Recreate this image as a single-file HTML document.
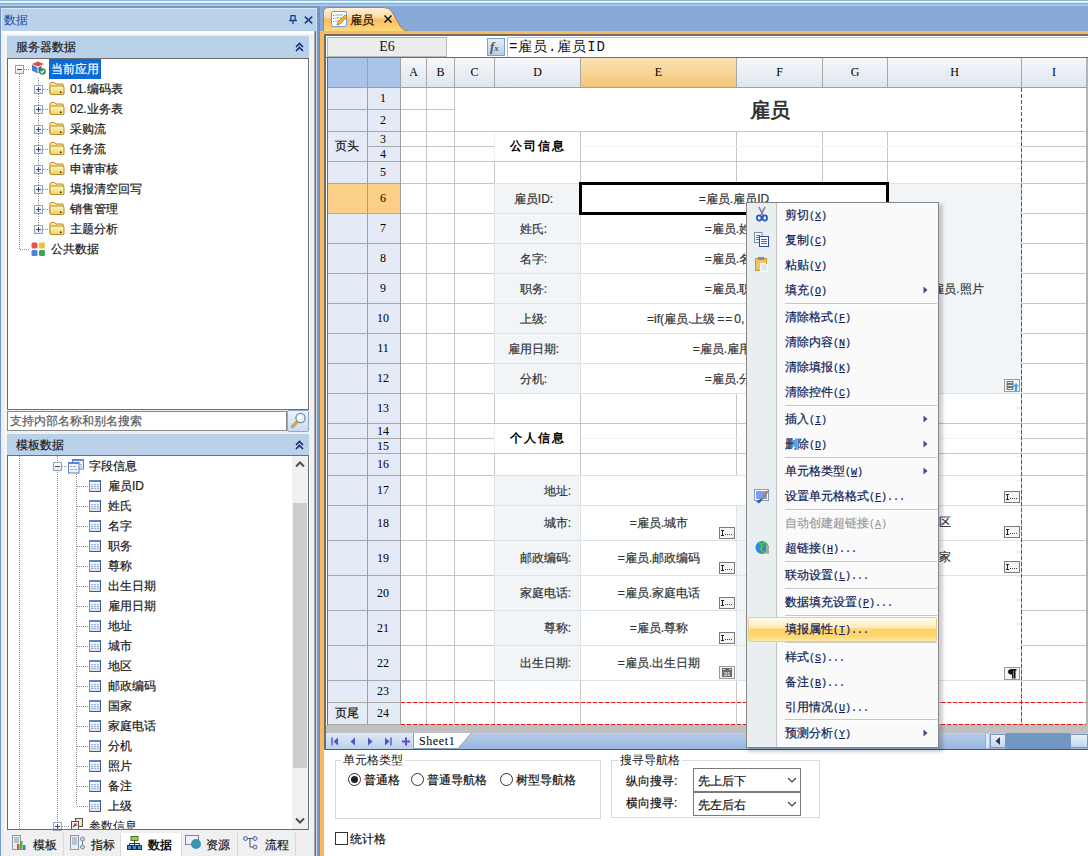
<!DOCTYPE html>
<html><head><meta charset="utf-8"><style>
html,body{margin:0;padding:0;}
body{width:1088px;height:856px;position:relative;overflow:hidden;background:#fff;font-family:'Liberation Sans',sans-serif;font-size:12px;}
body div, body svg{position:absolute;}
body div div{position:absolute;}
u{text-decoration:underline;}
</style></head><body>
<div style="left:0px;top:0px;width:1088px;height:1px;background:#94b8d8"></div>
<div style="left:0px;top:1px;width:1088px;height:1px;background:#eafcff"></div>
<div style="left:0px;top:2px;width:1088px;height:1px;background:#c8f2fb"></div>
<div style="left:0px;top:3px;width:1088px;height:1px;background:#98a8c8"></div>
<div style="left:0px;top:4px;width:1088px;height:1px;background:#a8bcdc"></div>
<div style="left:0px;top:5px;width:1088px;height:1px;background:#b4c8e6"></div>
<div style="left:0px;top:6px;width:320px;height:2px;background:#7398cd"></div>
<div style="left:0px;top:8px;width:317px;height:848px;background:#f0f0f0"></div>
<div style="left:0px;top:6px;width:1px;height:850px;background:#7398cd"></div>
<div style="left:1px;top:8px;width:316px;height:23px;background:#bad1ea;border-top:1px solid #dce8f4;border-left:1px solid #dce8f4;border-right:1px solid #e6eef8;box-sizing:border-box;border-top-right-radius:2px"></div>
<div style="left:4px;top:11.5px;height:16px;line-height:16px;font-size:12px;color:#1c4a9a;white-space:nowrap;">数据</div>
<div style="left:5px;top:34px;width:1px;height:798px;background:#fff"></div>
<svg style="left:289px;top:15px" width="8" height="9" viewBox="0 0 8 9"><path d="M1.6 0.7h4.8M1.9 0.5v4.8M6.1 0.5v4.8M0 5.5h8M4 5.5V9" stroke="#15428b" stroke-width="1.3" fill="none"/></svg>
<svg style="left:304px;top:15.5px" width="9" height="8" viewBox="0 0 9 8"><path d="M0.8 0.6L8.2 7.4M8.2 0.6L0.8 7.4" stroke="#15428b" stroke-width="1.6" fill="none"/></svg>
<div style="left:2px;top:31px;width:313px;height:3px;background:#ffffff"></div>
<div style="left:314px;top:31px;width:1px;height:825px;background:#a8a8a8"></div>
<div style="left:315px;top:31px;width:1px;height:825px;background:#6e6e6e"></div>
<div style="left:7px;top:36px;width:302px;height:22px;background:#bad1ea"></div>
<div style="left:16px;top:38.5px;height:16px;line-height:16px;font-size:12px;color:#222;white-space:nowrap;-webkit-text-stroke:0.2px #222;">服务器数据</div>
<svg style="left:295px;top:42px" width="9" height="10" viewBox="0 0 9 10"><path d="M1 5L4.5 1.5L8 5M1 9L4.5 5.5L8 9" stroke="#1a2a7a" stroke-width="1.7" fill="none"/></svg>
<div style="left:7px;top:58px;width:302px;height:352px;background:#fff;border:1px solid #6e6e6e;box-sizing:border-box"></div>
<div style="left:309px;top:58px;width:1px;height:352px;background:#fff"></div>
<div style="left:19px;top:74px;width:1px;height:176px;background:repeating-linear-gradient(#8c8c8c 0 1px,transparent 1px 2px)"></div>
<div style="left:20px;top:249px;width:10px;height:1px;background:repeating-linear-gradient(90deg,#8c8c8c 0 1px,transparent 1px 2px)"></div>
<div style="left:15px;top:65px;width:9px;height:9px;box-sizing:border-box;border:1px solid #9aa3ad;background:linear-gradient(#fff,#e4e8ec)"></div>
<div style="left:17px;top:69px;width:5px;height:1px;background:#2f4f8f"></div>
<div style="left:24px;top:69px;width:6px;height:1px;background:repeating-linear-gradient(90deg,#8c8c8c 0 1px,transparent 1px 2px)"></div>
<svg style="left:31px;top:60px" width="15" height="15" viewBox="0 0 15 15"><path d="M1 4L7 1.5L13 4L7 6.5z" fill="#e24a3b"/><path d="M1 4.5v6l5.5 3v-6z" fill="#4a7fd0"/><path d="M7.5 7.5v6l3-1.5v-6z" fill="#2e5fb0"/><circle cx="11.5" cy="11.5" r="3.3" fill="#2f9a4e"/><path d="M9.8 11.5l1.2 1.2 2-2.2" stroke="#fff" stroke-width="1.2" fill="none"/></svg>
<div style="left:49px;top:59px;width:52px;height:20px;background:#0a6ad6"></div>
<div style="left:51px;top:61.0px;height:16px;line-height:16px;font-size:12px;color:#fff;white-space:nowrap;-webkit-text-stroke:0.2px #fff;">当前应用</div>
<div style="left:38px;top:78px;width:1px;height:151px;background:repeating-linear-gradient(#8c8c8c 0 1px,transparent 1px 2px)"></div>
<div style="left:34px;top:85px;width:9px;height:9px;box-sizing:border-box;border:1px solid #9aa3ad;background:linear-gradient(#fff,#e4e8ec)"></div>
<div style="left:36px;top:89px;width:5px;height:1px;background:#2f4f8f"></div>
<div style="left:38px;top:87px;width:1px;height:5px;background:#2f4f8f"></div>
<div style="left:43px;top:89px;width:5px;height:1px;background:repeating-linear-gradient(90deg,#8c8c8c 0 1px,transparent 1px 2px)"></div>
<svg style="left:49px;top:81px" width="16" height="14" viewBox="0 0 16 14"><defs><linearGradient id="fo" x1="0" y1="0" x2="0" y2="1"><stop offset="0" stop-color="#fff8c8"/><stop offset="1" stop-color="#f2cf58"/></linearGradient></defs><path d="M1 12.5V3Q1 1.5 2.5 1.5H5.5L7 3H13Q14.5 3 14.5 4.5V12.5z" fill="#fbe7a0" stroke="#b88a20" stroke-width="1"/><path d="M1 12.5V6.5Q1 5 2.5 5H13.5Q15 5 15 6.5V12.5Q15 13.5 14 13.5H2Q1 13.5 1 12.5z" fill="url(#fo)" stroke="#b88a20" stroke-width="1"/><rect x="11" y="10.5" width="1.5" height="1.5" fill="#222"/></svg>
<div style="left:70px;top:80.5px;height:16px;line-height:16px;font-size:12px;color:#1a1a1a;white-space:nowrap;-webkit-text-stroke:0.2px #1a1a1a;">01.编码表</div>
<div style="left:34px;top:105px;width:9px;height:9px;box-sizing:border-box;border:1px solid #9aa3ad;background:linear-gradient(#fff,#e4e8ec)"></div>
<div style="left:36px;top:109px;width:5px;height:1px;background:#2f4f8f"></div>
<div style="left:38px;top:107px;width:1px;height:5px;background:#2f4f8f"></div>
<div style="left:43px;top:109px;width:5px;height:1px;background:repeating-linear-gradient(90deg,#8c8c8c 0 1px,transparent 1px 2px)"></div>
<svg style="left:49px;top:101px" width="16" height="14" viewBox="0 0 16 14"><defs><linearGradient id="fo" x1="0" y1="0" x2="0" y2="1"><stop offset="0" stop-color="#fff8c8"/><stop offset="1" stop-color="#f2cf58"/></linearGradient></defs><path d="M1 12.5V3Q1 1.5 2.5 1.5H5.5L7 3H13Q14.5 3 14.5 4.5V12.5z" fill="#fbe7a0" stroke="#b88a20" stroke-width="1"/><path d="M1 12.5V6.5Q1 5 2.5 5H13.5Q15 5 15 6.5V12.5Q15 13.5 14 13.5H2Q1 13.5 1 12.5z" fill="url(#fo)" stroke="#b88a20" stroke-width="1"/><rect x="11" y="10.5" width="1.5" height="1.5" fill="#222"/></svg>
<div style="left:70px;top:100.5px;height:16px;line-height:16px;font-size:12px;color:#1a1a1a;white-space:nowrap;-webkit-text-stroke:0.2px #1a1a1a;">02.业务表</div>
<div style="left:34px;top:125px;width:9px;height:9px;box-sizing:border-box;border:1px solid #9aa3ad;background:linear-gradient(#fff,#e4e8ec)"></div>
<div style="left:36px;top:129px;width:5px;height:1px;background:#2f4f8f"></div>
<div style="left:38px;top:127px;width:1px;height:5px;background:#2f4f8f"></div>
<div style="left:43px;top:129px;width:5px;height:1px;background:repeating-linear-gradient(90deg,#8c8c8c 0 1px,transparent 1px 2px)"></div>
<svg style="left:49px;top:121px" width="16" height="14" viewBox="0 0 16 14"><defs><linearGradient id="fo" x1="0" y1="0" x2="0" y2="1"><stop offset="0" stop-color="#fff8c8"/><stop offset="1" stop-color="#f2cf58"/></linearGradient></defs><path d="M1 12.5V3Q1 1.5 2.5 1.5H5.5L7 3H13Q14.5 3 14.5 4.5V12.5z" fill="#fbe7a0" stroke="#b88a20" stroke-width="1"/><path d="M1 12.5V6.5Q1 5 2.5 5H13.5Q15 5 15 6.5V12.5Q15 13.5 14 13.5H2Q1 13.5 1 12.5z" fill="url(#fo)" stroke="#b88a20" stroke-width="1"/><rect x="11" y="10.5" width="1.5" height="1.5" fill="#222"/></svg>
<div style="left:70px;top:120.5px;height:16px;line-height:16px;font-size:12px;color:#1a1a1a;white-space:nowrap;-webkit-text-stroke:0.2px #1a1a1a;">采购流</div>
<div style="left:34px;top:145px;width:9px;height:9px;box-sizing:border-box;border:1px solid #9aa3ad;background:linear-gradient(#fff,#e4e8ec)"></div>
<div style="left:36px;top:149px;width:5px;height:1px;background:#2f4f8f"></div>
<div style="left:38px;top:147px;width:1px;height:5px;background:#2f4f8f"></div>
<div style="left:43px;top:149px;width:5px;height:1px;background:repeating-linear-gradient(90deg,#8c8c8c 0 1px,transparent 1px 2px)"></div>
<svg style="left:49px;top:141px" width="16" height="14" viewBox="0 0 16 14"><defs><linearGradient id="fo" x1="0" y1="0" x2="0" y2="1"><stop offset="0" stop-color="#fff8c8"/><stop offset="1" stop-color="#f2cf58"/></linearGradient></defs><path d="M1 12.5V3Q1 1.5 2.5 1.5H5.5L7 3H13Q14.5 3 14.5 4.5V12.5z" fill="#fbe7a0" stroke="#b88a20" stroke-width="1"/><path d="M1 12.5V6.5Q1 5 2.5 5H13.5Q15 5 15 6.5V12.5Q15 13.5 14 13.5H2Q1 13.5 1 12.5z" fill="url(#fo)" stroke="#b88a20" stroke-width="1"/><rect x="11" y="10.5" width="1.5" height="1.5" fill="#222"/></svg>
<div style="left:70px;top:140.5px;height:16px;line-height:16px;font-size:12px;color:#1a1a1a;white-space:nowrap;-webkit-text-stroke:0.2px #1a1a1a;">任务流</div>
<div style="left:34px;top:165px;width:9px;height:9px;box-sizing:border-box;border:1px solid #9aa3ad;background:linear-gradient(#fff,#e4e8ec)"></div>
<div style="left:36px;top:169px;width:5px;height:1px;background:#2f4f8f"></div>
<div style="left:38px;top:167px;width:1px;height:5px;background:#2f4f8f"></div>
<div style="left:43px;top:169px;width:5px;height:1px;background:repeating-linear-gradient(90deg,#8c8c8c 0 1px,transparent 1px 2px)"></div>
<svg style="left:49px;top:161px" width="16" height="14" viewBox="0 0 16 14"><defs><linearGradient id="fo" x1="0" y1="0" x2="0" y2="1"><stop offset="0" stop-color="#fff8c8"/><stop offset="1" stop-color="#f2cf58"/></linearGradient></defs><path d="M1 12.5V3Q1 1.5 2.5 1.5H5.5L7 3H13Q14.5 3 14.5 4.5V12.5z" fill="#fbe7a0" stroke="#b88a20" stroke-width="1"/><path d="M1 12.5V6.5Q1 5 2.5 5H13.5Q15 5 15 6.5V12.5Q15 13.5 14 13.5H2Q1 13.5 1 12.5z" fill="url(#fo)" stroke="#b88a20" stroke-width="1"/><rect x="11" y="10.5" width="1.5" height="1.5" fill="#222"/></svg>
<div style="left:70px;top:160.5px;height:16px;line-height:16px;font-size:12px;color:#1a1a1a;white-space:nowrap;-webkit-text-stroke:0.2px #1a1a1a;">申请审核</div>
<div style="left:34px;top:185px;width:9px;height:9px;box-sizing:border-box;border:1px solid #9aa3ad;background:linear-gradient(#fff,#e4e8ec)"></div>
<div style="left:36px;top:189px;width:5px;height:1px;background:#2f4f8f"></div>
<div style="left:38px;top:187px;width:1px;height:5px;background:#2f4f8f"></div>
<div style="left:43px;top:189px;width:5px;height:1px;background:repeating-linear-gradient(90deg,#8c8c8c 0 1px,transparent 1px 2px)"></div>
<svg style="left:49px;top:181px" width="16" height="14" viewBox="0 0 16 14"><defs><linearGradient id="fo" x1="0" y1="0" x2="0" y2="1"><stop offset="0" stop-color="#fff8c8"/><stop offset="1" stop-color="#f2cf58"/></linearGradient></defs><path d="M1 12.5V3Q1 1.5 2.5 1.5H5.5L7 3H13Q14.5 3 14.5 4.5V12.5z" fill="#fbe7a0" stroke="#b88a20" stroke-width="1"/><path d="M1 12.5V6.5Q1 5 2.5 5H13.5Q15 5 15 6.5V12.5Q15 13.5 14 13.5H2Q1 13.5 1 12.5z" fill="url(#fo)" stroke="#b88a20" stroke-width="1"/><rect x="11" y="10.5" width="1.5" height="1.5" fill="#222"/></svg>
<div style="left:70px;top:180.5px;height:16px;line-height:16px;font-size:12px;color:#1a1a1a;white-space:nowrap;-webkit-text-stroke:0.2px #1a1a1a;">填报清空回写</div>
<div style="left:34px;top:205px;width:9px;height:9px;box-sizing:border-box;border:1px solid #9aa3ad;background:linear-gradient(#fff,#e4e8ec)"></div>
<div style="left:36px;top:209px;width:5px;height:1px;background:#2f4f8f"></div>
<div style="left:38px;top:207px;width:1px;height:5px;background:#2f4f8f"></div>
<div style="left:43px;top:209px;width:5px;height:1px;background:repeating-linear-gradient(90deg,#8c8c8c 0 1px,transparent 1px 2px)"></div>
<svg style="left:49px;top:201px" width="16" height="14" viewBox="0 0 16 14"><defs><linearGradient id="fo" x1="0" y1="0" x2="0" y2="1"><stop offset="0" stop-color="#fff8c8"/><stop offset="1" stop-color="#f2cf58"/></linearGradient></defs><path d="M1 12.5V3Q1 1.5 2.5 1.5H5.5L7 3H13Q14.5 3 14.5 4.5V12.5z" fill="#fbe7a0" stroke="#b88a20" stroke-width="1"/><path d="M1 12.5V6.5Q1 5 2.5 5H13.5Q15 5 15 6.5V12.5Q15 13.5 14 13.5H2Q1 13.5 1 12.5z" fill="url(#fo)" stroke="#b88a20" stroke-width="1"/><rect x="11" y="10.5" width="1.5" height="1.5" fill="#222"/></svg>
<div style="left:70px;top:200.5px;height:16px;line-height:16px;font-size:12px;color:#1a1a1a;white-space:nowrap;-webkit-text-stroke:0.2px #1a1a1a;">销售管理</div>
<div style="left:34px;top:225px;width:9px;height:9px;box-sizing:border-box;border:1px solid #9aa3ad;background:linear-gradient(#fff,#e4e8ec)"></div>
<div style="left:36px;top:229px;width:5px;height:1px;background:#2f4f8f"></div>
<div style="left:38px;top:227px;width:1px;height:5px;background:#2f4f8f"></div>
<div style="left:43px;top:229px;width:5px;height:1px;background:repeating-linear-gradient(90deg,#8c8c8c 0 1px,transparent 1px 2px)"></div>
<svg style="left:49px;top:221px" width="16" height="14" viewBox="0 0 16 14"><defs><linearGradient id="fo" x1="0" y1="0" x2="0" y2="1"><stop offset="0" stop-color="#fff8c8"/><stop offset="1" stop-color="#f2cf58"/></linearGradient></defs><path d="M1 12.5V3Q1 1.5 2.5 1.5H5.5L7 3H13Q14.5 3 14.5 4.5V12.5z" fill="#fbe7a0" stroke="#b88a20" stroke-width="1"/><path d="M1 12.5V6.5Q1 5 2.5 5H13.5Q15 5 15 6.5V12.5Q15 13.5 14 13.5H2Q1 13.5 1 12.5z" fill="url(#fo)" stroke="#b88a20" stroke-width="1"/><rect x="11" y="10.5" width="1.5" height="1.5" fill="#222"/></svg>
<div style="left:70px;top:220.5px;height:16px;line-height:16px;font-size:12px;color:#1a1a1a;white-space:nowrap;-webkit-text-stroke:0.2px #1a1a1a;">主题分析</div>
<svg style="left:31px;top:242px" width="15" height="15" viewBox="0 0 15 15"><rect x="0.5" y="0.5" width="6" height="6" rx="1.5" fill="#e0574a"/><rect x="8" y="0.5" width="6" height="6" rx="1.5" fill="#f1c232"/><rect x="0.5" y="8" width="6" height="6" rx="1.5" fill="#4a86d8"/><rect x="8" y="8" width="6" height="6" rx="1.5" fill="#36a85a"/></svg>
<div style="left:51px;top:240.5px;height:16px;line-height:16px;font-size:12px;color:#1a1a1a;white-space:nowrap;-webkit-text-stroke:0.2px #1a1a1a;">公共数据</div>
<div style="left:7px;top:411px;width:280px;height:20px;background:#fff;border:1px solid #8a8a8a;box-sizing:border-box"></div>
<div style="left:10px;top:413.0px;height:16px;line-height:16px;font-size:12px;color:#5a5a5a;white-space:nowrap;-webkit-text-stroke:0.2px #5a5a5a;">支持内部名称和别名搜索</div>
<div style="left:287px;top:410px;width:22px;height:22px;background:linear-gradient(#eaf2fb,#c9dcf2);border:1px solid #8fa8c8;box-sizing:border-box;border-radius:2px"></div>
<svg style="left:289px;top:412px" width="18" height="18" viewBox="0 0 18 18"><path d="M8 10L3.5 14.5" stroke="#c07a30" stroke-width="3" stroke-linecap="round"/><path d="M8 10L3.5 14.5" stroke="#f3b060" stroke-width="1.4" stroke-linecap="round"/><circle cx="11.5" cy="6" r="4.6" fill="#e4f6ff" stroke="#7a8a9a" stroke-width="1.3"/><circle cx="10.5" cy="5" r="2" fill="#ffffff"/></svg>
<div style="left:7px;top:434px;width:302px;height:21px;background:#bad1ea"></div>
<div style="left:16px;top:436.5px;height:16px;line-height:16px;font-size:12px;color:#222;white-space:nowrap;-webkit-text-stroke:0.2px #222;">模板数据</div>
<svg style="left:295px;top:440px" width="9" height="10" viewBox="0 0 9 10"><path d="M1 5L4.5 1.5L8 5M1 9L4.5 5.5L8 9" stroke="#1a2a7a" stroke-width="1.7" fill="none"/></svg>
<div style="left:7px;top:455px;width:302px;height:375px;background:#fff;border:1px solid #6e6e6e;box-sizing:border-box"></div>
<div style="left:309px;top:455px;width:1px;height:375px;background:#fff"></div>
<div style="left:19px;top:456px;width:1px;height:373px;background:repeating-linear-gradient(#8c8c8c 0 1px,transparent 1px 2px)"></div>
<div style="left:57px;top:456px;width:1px;height:373px;background:repeating-linear-gradient(#8c8c8c 0 1px,transparent 1px 2px)"></div>
<div style="left:76px;top:472px;width:1px;height:334px;background:repeating-linear-gradient(#8c8c8c 0 1px,transparent 1px 2px)"></div>
<div style="left:53px;top:462px;width:9px;height:9px;box-sizing:border-box;border:1px solid #9aa3ad;background:linear-gradient(#fff,#e4e8ec)"></div>
<div style="left:55px;top:466px;width:5px;height:1px;background:#2f4f8f"></div>
<div style="left:62px;top:466px;width:5px;height:1px;background:repeating-linear-gradient(90deg,#8c8c8c 0 1px,transparent 1px 2px)"></div>
<svg style="left:68px;top:459px" width="16" height="15" viewBox="0 0 16 15"><rect x="4.5" y="0.5" width="11" height="9.5" fill="#eef2fa" stroke="#5f7fb8"/><rect x="4" y="0" width="12" height="2" fill="#5b86d6"/><rect x="0.5" y="3.5" width="10.5" height="10.5" fill="#eef2fa" stroke="#5f7fb8"/><rect x="0" y="3" width="11" height="2" fill="#5b86d6"/><path d="M2 7.5h2M5 7.5h3M2 10.5h3M6 10.5h3M12 5.5h2M12 7.5h2" stroke="#9db0d0"/></svg>
<div style="left:89px;top:457.5px;height:16px;line-height:16px;font-size:12px;color:#1a1a1a;white-space:nowrap;-webkit-text-stroke:0.2px #1a1a1a;">字段信息</div>
<div style="left:77px;top:486px;width:11px;height:1px;background:repeating-linear-gradient(90deg,#8c8c8c 0 1px,transparent 1px 2px)"></div>
<svg style="left:89px;top:480px" width="12" height="12" viewBox="0 0 12 12"><defs><linearGradient id="fg" x1="0" y1="0" x2="0" y2="1"><stop offset="0" stop-color="#ffffff"/><stop offset="1" stop-color="#d6e0f0"/></linearGradient></defs><rect x="0.5" y="0.5" width="11" height="11" fill="url(#fg)" stroke="#6f8cc0"/><rect x="0" y="0" width="12" height="2" fill="#5b86d6"/><path d="M0.5 11.5h11v-11" stroke="#3f5a88" fill="none"/><path d="M2 4.5h2M5 4.5h2M8 4.5h2M2 6.5h2M5 6.5h2M8 6.5h2M2 8.5h2M5 8.5h2M8 8.5h2" stroke="#9db0d0" stroke-width="1"/></svg>
<div style="left:108px;top:477.5px;height:16px;line-height:16px;font-size:12px;color:#1a1a1a;white-space:nowrap;-webkit-text-stroke:0.2px #1a1a1a;">雇员ID</div>
<div style="left:77px;top:506px;width:11px;height:1px;background:repeating-linear-gradient(90deg,#8c8c8c 0 1px,transparent 1px 2px)"></div>
<svg style="left:89px;top:500px" width="12" height="12" viewBox="0 0 12 12"><defs><linearGradient id="fg" x1="0" y1="0" x2="0" y2="1"><stop offset="0" stop-color="#ffffff"/><stop offset="1" stop-color="#d6e0f0"/></linearGradient></defs><rect x="0.5" y="0.5" width="11" height="11" fill="url(#fg)" stroke="#6f8cc0"/><rect x="0" y="0" width="12" height="2" fill="#5b86d6"/><path d="M0.5 11.5h11v-11" stroke="#3f5a88" fill="none"/><path d="M2 4.5h2M5 4.5h2M8 4.5h2M2 6.5h2M5 6.5h2M8 6.5h2M2 8.5h2M5 8.5h2M8 8.5h2" stroke="#9db0d0" stroke-width="1"/></svg>
<div style="left:108px;top:497.5px;height:16px;line-height:16px;font-size:12px;color:#1a1a1a;white-space:nowrap;-webkit-text-stroke:0.2px #1a1a1a;">姓氏</div>
<div style="left:77px;top:526px;width:11px;height:1px;background:repeating-linear-gradient(90deg,#8c8c8c 0 1px,transparent 1px 2px)"></div>
<svg style="left:89px;top:520px" width="12" height="12" viewBox="0 0 12 12"><defs><linearGradient id="fg" x1="0" y1="0" x2="0" y2="1"><stop offset="0" stop-color="#ffffff"/><stop offset="1" stop-color="#d6e0f0"/></linearGradient></defs><rect x="0.5" y="0.5" width="11" height="11" fill="url(#fg)" stroke="#6f8cc0"/><rect x="0" y="0" width="12" height="2" fill="#5b86d6"/><path d="M0.5 11.5h11v-11" stroke="#3f5a88" fill="none"/><path d="M2 4.5h2M5 4.5h2M8 4.5h2M2 6.5h2M5 6.5h2M8 6.5h2M2 8.5h2M5 8.5h2M8 8.5h2" stroke="#9db0d0" stroke-width="1"/></svg>
<div style="left:108px;top:517.5px;height:16px;line-height:16px;font-size:12px;color:#1a1a1a;white-space:nowrap;-webkit-text-stroke:0.2px #1a1a1a;">名字</div>
<div style="left:77px;top:546px;width:11px;height:1px;background:repeating-linear-gradient(90deg,#8c8c8c 0 1px,transparent 1px 2px)"></div>
<svg style="left:89px;top:540px" width="12" height="12" viewBox="0 0 12 12"><defs><linearGradient id="fg" x1="0" y1="0" x2="0" y2="1"><stop offset="0" stop-color="#ffffff"/><stop offset="1" stop-color="#d6e0f0"/></linearGradient></defs><rect x="0.5" y="0.5" width="11" height="11" fill="url(#fg)" stroke="#6f8cc0"/><rect x="0" y="0" width="12" height="2" fill="#5b86d6"/><path d="M0.5 11.5h11v-11" stroke="#3f5a88" fill="none"/><path d="M2 4.5h2M5 4.5h2M8 4.5h2M2 6.5h2M5 6.5h2M8 6.5h2M2 8.5h2M5 8.5h2M8 8.5h2" stroke="#9db0d0" stroke-width="1"/></svg>
<div style="left:108px;top:537.5px;height:16px;line-height:16px;font-size:12px;color:#1a1a1a;white-space:nowrap;-webkit-text-stroke:0.2px #1a1a1a;">职务</div>
<div style="left:77px;top:566px;width:11px;height:1px;background:repeating-linear-gradient(90deg,#8c8c8c 0 1px,transparent 1px 2px)"></div>
<svg style="left:89px;top:560px" width="12" height="12" viewBox="0 0 12 12"><defs><linearGradient id="fg" x1="0" y1="0" x2="0" y2="1"><stop offset="0" stop-color="#ffffff"/><stop offset="1" stop-color="#d6e0f0"/></linearGradient></defs><rect x="0.5" y="0.5" width="11" height="11" fill="url(#fg)" stroke="#6f8cc0"/><rect x="0" y="0" width="12" height="2" fill="#5b86d6"/><path d="M0.5 11.5h11v-11" stroke="#3f5a88" fill="none"/><path d="M2 4.5h2M5 4.5h2M8 4.5h2M2 6.5h2M5 6.5h2M8 6.5h2M2 8.5h2M5 8.5h2M8 8.5h2" stroke="#9db0d0" stroke-width="1"/></svg>
<div style="left:108px;top:557.5px;height:16px;line-height:16px;font-size:12px;color:#1a1a1a;white-space:nowrap;-webkit-text-stroke:0.2px #1a1a1a;">尊称</div>
<div style="left:77px;top:586px;width:11px;height:1px;background:repeating-linear-gradient(90deg,#8c8c8c 0 1px,transparent 1px 2px)"></div>
<svg style="left:89px;top:580px" width="12" height="12" viewBox="0 0 12 12"><defs><linearGradient id="fg" x1="0" y1="0" x2="0" y2="1"><stop offset="0" stop-color="#ffffff"/><stop offset="1" stop-color="#d6e0f0"/></linearGradient></defs><rect x="0.5" y="0.5" width="11" height="11" fill="url(#fg)" stroke="#6f8cc0"/><rect x="0" y="0" width="12" height="2" fill="#5b86d6"/><path d="M0.5 11.5h11v-11" stroke="#3f5a88" fill="none"/><path d="M2 4.5h2M5 4.5h2M8 4.5h2M2 6.5h2M5 6.5h2M8 6.5h2M2 8.5h2M5 8.5h2M8 8.5h2" stroke="#9db0d0" stroke-width="1"/></svg>
<div style="left:108px;top:577.5px;height:16px;line-height:16px;font-size:12px;color:#1a1a1a;white-space:nowrap;-webkit-text-stroke:0.2px #1a1a1a;">出生日期</div>
<div style="left:77px;top:606px;width:11px;height:1px;background:repeating-linear-gradient(90deg,#8c8c8c 0 1px,transparent 1px 2px)"></div>
<svg style="left:89px;top:600px" width="12" height="12" viewBox="0 0 12 12"><defs><linearGradient id="fg" x1="0" y1="0" x2="0" y2="1"><stop offset="0" stop-color="#ffffff"/><stop offset="1" stop-color="#d6e0f0"/></linearGradient></defs><rect x="0.5" y="0.5" width="11" height="11" fill="url(#fg)" stroke="#6f8cc0"/><rect x="0" y="0" width="12" height="2" fill="#5b86d6"/><path d="M0.5 11.5h11v-11" stroke="#3f5a88" fill="none"/><path d="M2 4.5h2M5 4.5h2M8 4.5h2M2 6.5h2M5 6.5h2M8 6.5h2M2 8.5h2M5 8.5h2M8 8.5h2" stroke="#9db0d0" stroke-width="1"/></svg>
<div style="left:108px;top:597.5px;height:16px;line-height:16px;font-size:12px;color:#1a1a1a;white-space:nowrap;-webkit-text-stroke:0.2px #1a1a1a;">雇用日期</div>
<div style="left:77px;top:626px;width:11px;height:1px;background:repeating-linear-gradient(90deg,#8c8c8c 0 1px,transparent 1px 2px)"></div>
<svg style="left:89px;top:620px" width="12" height="12" viewBox="0 0 12 12"><defs><linearGradient id="fg" x1="0" y1="0" x2="0" y2="1"><stop offset="0" stop-color="#ffffff"/><stop offset="1" stop-color="#d6e0f0"/></linearGradient></defs><rect x="0.5" y="0.5" width="11" height="11" fill="url(#fg)" stroke="#6f8cc0"/><rect x="0" y="0" width="12" height="2" fill="#5b86d6"/><path d="M0.5 11.5h11v-11" stroke="#3f5a88" fill="none"/><path d="M2 4.5h2M5 4.5h2M8 4.5h2M2 6.5h2M5 6.5h2M8 6.5h2M2 8.5h2M5 8.5h2M8 8.5h2" stroke="#9db0d0" stroke-width="1"/></svg>
<div style="left:108px;top:617.5px;height:16px;line-height:16px;font-size:12px;color:#1a1a1a;white-space:nowrap;-webkit-text-stroke:0.2px #1a1a1a;">地址</div>
<div style="left:77px;top:646px;width:11px;height:1px;background:repeating-linear-gradient(90deg,#8c8c8c 0 1px,transparent 1px 2px)"></div>
<svg style="left:89px;top:640px" width="12" height="12" viewBox="0 0 12 12"><defs><linearGradient id="fg" x1="0" y1="0" x2="0" y2="1"><stop offset="0" stop-color="#ffffff"/><stop offset="1" stop-color="#d6e0f0"/></linearGradient></defs><rect x="0.5" y="0.5" width="11" height="11" fill="url(#fg)" stroke="#6f8cc0"/><rect x="0" y="0" width="12" height="2" fill="#5b86d6"/><path d="M0.5 11.5h11v-11" stroke="#3f5a88" fill="none"/><path d="M2 4.5h2M5 4.5h2M8 4.5h2M2 6.5h2M5 6.5h2M8 6.5h2M2 8.5h2M5 8.5h2M8 8.5h2" stroke="#9db0d0" stroke-width="1"/></svg>
<div style="left:108px;top:637.5px;height:16px;line-height:16px;font-size:12px;color:#1a1a1a;white-space:nowrap;-webkit-text-stroke:0.2px #1a1a1a;">城市</div>
<div style="left:77px;top:666px;width:11px;height:1px;background:repeating-linear-gradient(90deg,#8c8c8c 0 1px,transparent 1px 2px)"></div>
<svg style="left:89px;top:660px" width="12" height="12" viewBox="0 0 12 12"><defs><linearGradient id="fg" x1="0" y1="0" x2="0" y2="1"><stop offset="0" stop-color="#ffffff"/><stop offset="1" stop-color="#d6e0f0"/></linearGradient></defs><rect x="0.5" y="0.5" width="11" height="11" fill="url(#fg)" stroke="#6f8cc0"/><rect x="0" y="0" width="12" height="2" fill="#5b86d6"/><path d="M0.5 11.5h11v-11" stroke="#3f5a88" fill="none"/><path d="M2 4.5h2M5 4.5h2M8 4.5h2M2 6.5h2M5 6.5h2M8 6.5h2M2 8.5h2M5 8.5h2M8 8.5h2" stroke="#9db0d0" stroke-width="1"/></svg>
<div style="left:108px;top:657.5px;height:16px;line-height:16px;font-size:12px;color:#1a1a1a;white-space:nowrap;-webkit-text-stroke:0.2px #1a1a1a;">地区</div>
<div style="left:77px;top:686px;width:11px;height:1px;background:repeating-linear-gradient(90deg,#8c8c8c 0 1px,transparent 1px 2px)"></div>
<svg style="left:89px;top:680px" width="12" height="12" viewBox="0 0 12 12"><defs><linearGradient id="fg" x1="0" y1="0" x2="0" y2="1"><stop offset="0" stop-color="#ffffff"/><stop offset="1" stop-color="#d6e0f0"/></linearGradient></defs><rect x="0.5" y="0.5" width="11" height="11" fill="url(#fg)" stroke="#6f8cc0"/><rect x="0" y="0" width="12" height="2" fill="#5b86d6"/><path d="M0.5 11.5h11v-11" stroke="#3f5a88" fill="none"/><path d="M2 4.5h2M5 4.5h2M8 4.5h2M2 6.5h2M5 6.5h2M8 6.5h2M2 8.5h2M5 8.5h2M8 8.5h2" stroke="#9db0d0" stroke-width="1"/></svg>
<div style="left:108px;top:677.5px;height:16px;line-height:16px;font-size:12px;color:#1a1a1a;white-space:nowrap;-webkit-text-stroke:0.2px #1a1a1a;">邮政编码</div>
<div style="left:77px;top:706px;width:11px;height:1px;background:repeating-linear-gradient(90deg,#8c8c8c 0 1px,transparent 1px 2px)"></div>
<svg style="left:89px;top:700px" width="12" height="12" viewBox="0 0 12 12"><defs><linearGradient id="fg" x1="0" y1="0" x2="0" y2="1"><stop offset="0" stop-color="#ffffff"/><stop offset="1" stop-color="#d6e0f0"/></linearGradient></defs><rect x="0.5" y="0.5" width="11" height="11" fill="url(#fg)" stroke="#6f8cc0"/><rect x="0" y="0" width="12" height="2" fill="#5b86d6"/><path d="M0.5 11.5h11v-11" stroke="#3f5a88" fill="none"/><path d="M2 4.5h2M5 4.5h2M8 4.5h2M2 6.5h2M5 6.5h2M8 6.5h2M2 8.5h2M5 8.5h2M8 8.5h2" stroke="#9db0d0" stroke-width="1"/></svg>
<div style="left:108px;top:697.5px;height:16px;line-height:16px;font-size:12px;color:#1a1a1a;white-space:nowrap;-webkit-text-stroke:0.2px #1a1a1a;">国家</div>
<div style="left:77px;top:726px;width:11px;height:1px;background:repeating-linear-gradient(90deg,#8c8c8c 0 1px,transparent 1px 2px)"></div>
<svg style="left:89px;top:720px" width="12" height="12" viewBox="0 0 12 12"><defs><linearGradient id="fg" x1="0" y1="0" x2="0" y2="1"><stop offset="0" stop-color="#ffffff"/><stop offset="1" stop-color="#d6e0f0"/></linearGradient></defs><rect x="0.5" y="0.5" width="11" height="11" fill="url(#fg)" stroke="#6f8cc0"/><rect x="0" y="0" width="12" height="2" fill="#5b86d6"/><path d="M0.5 11.5h11v-11" stroke="#3f5a88" fill="none"/><path d="M2 4.5h2M5 4.5h2M8 4.5h2M2 6.5h2M5 6.5h2M8 6.5h2M2 8.5h2M5 8.5h2M8 8.5h2" stroke="#9db0d0" stroke-width="1"/></svg>
<div style="left:108px;top:717.5px;height:16px;line-height:16px;font-size:12px;color:#1a1a1a;white-space:nowrap;-webkit-text-stroke:0.2px #1a1a1a;">家庭电话</div>
<div style="left:77px;top:746px;width:11px;height:1px;background:repeating-linear-gradient(90deg,#8c8c8c 0 1px,transparent 1px 2px)"></div>
<svg style="left:89px;top:740px" width="12" height="12" viewBox="0 0 12 12"><defs><linearGradient id="fg" x1="0" y1="0" x2="0" y2="1"><stop offset="0" stop-color="#ffffff"/><stop offset="1" stop-color="#d6e0f0"/></linearGradient></defs><rect x="0.5" y="0.5" width="11" height="11" fill="url(#fg)" stroke="#6f8cc0"/><rect x="0" y="0" width="12" height="2" fill="#5b86d6"/><path d="M0.5 11.5h11v-11" stroke="#3f5a88" fill="none"/><path d="M2 4.5h2M5 4.5h2M8 4.5h2M2 6.5h2M5 6.5h2M8 6.5h2M2 8.5h2M5 8.5h2M8 8.5h2" stroke="#9db0d0" stroke-width="1"/></svg>
<div style="left:108px;top:737.5px;height:16px;line-height:16px;font-size:12px;color:#1a1a1a;white-space:nowrap;-webkit-text-stroke:0.2px #1a1a1a;">分机</div>
<div style="left:77px;top:766px;width:11px;height:1px;background:repeating-linear-gradient(90deg,#8c8c8c 0 1px,transparent 1px 2px)"></div>
<svg style="left:89px;top:760px" width="12" height="12" viewBox="0 0 12 12"><defs><linearGradient id="fg" x1="0" y1="0" x2="0" y2="1"><stop offset="0" stop-color="#ffffff"/><stop offset="1" stop-color="#d6e0f0"/></linearGradient></defs><rect x="0.5" y="0.5" width="11" height="11" fill="url(#fg)" stroke="#6f8cc0"/><rect x="0" y="0" width="12" height="2" fill="#5b86d6"/><path d="M0.5 11.5h11v-11" stroke="#3f5a88" fill="none"/><path d="M2 4.5h2M5 4.5h2M8 4.5h2M2 6.5h2M5 6.5h2M8 6.5h2M2 8.5h2M5 8.5h2M8 8.5h2" stroke="#9db0d0" stroke-width="1"/></svg>
<div style="left:108px;top:757.5px;height:16px;line-height:16px;font-size:12px;color:#1a1a1a;white-space:nowrap;-webkit-text-stroke:0.2px #1a1a1a;">照片</div>
<div style="left:77px;top:786px;width:11px;height:1px;background:repeating-linear-gradient(90deg,#8c8c8c 0 1px,transparent 1px 2px)"></div>
<svg style="left:89px;top:780px" width="12" height="12" viewBox="0 0 12 12"><defs><linearGradient id="fg" x1="0" y1="0" x2="0" y2="1"><stop offset="0" stop-color="#ffffff"/><stop offset="1" stop-color="#d6e0f0"/></linearGradient></defs><rect x="0.5" y="0.5" width="11" height="11" fill="url(#fg)" stroke="#6f8cc0"/><rect x="0" y="0" width="12" height="2" fill="#5b86d6"/><path d="M0.5 11.5h11v-11" stroke="#3f5a88" fill="none"/><path d="M2 4.5h2M5 4.5h2M8 4.5h2M2 6.5h2M5 6.5h2M8 6.5h2M2 8.5h2M5 8.5h2M8 8.5h2" stroke="#9db0d0" stroke-width="1"/></svg>
<div style="left:108px;top:777.5px;height:16px;line-height:16px;font-size:12px;color:#1a1a1a;white-space:nowrap;-webkit-text-stroke:0.2px #1a1a1a;">备注</div>
<div style="left:77px;top:806px;width:11px;height:1px;background:repeating-linear-gradient(90deg,#8c8c8c 0 1px,transparent 1px 2px)"></div>
<svg style="left:89px;top:800px" width="12" height="12" viewBox="0 0 12 12"><defs><linearGradient id="fg" x1="0" y1="0" x2="0" y2="1"><stop offset="0" stop-color="#ffffff"/><stop offset="1" stop-color="#d6e0f0"/></linearGradient></defs><rect x="0.5" y="0.5" width="11" height="11" fill="url(#fg)" stroke="#6f8cc0"/><rect x="0" y="0" width="12" height="2" fill="#5b86d6"/><path d="M0.5 11.5h11v-11" stroke="#3f5a88" fill="none"/><path d="M2 4.5h2M5 4.5h2M8 4.5h2M2 6.5h2M5 6.5h2M8 6.5h2M2 8.5h2M5 8.5h2M8 8.5h2" stroke="#9db0d0" stroke-width="1"/></svg>
<div style="left:108px;top:797.5px;height:16px;line-height:16px;font-size:12px;color:#1a1a1a;white-space:nowrap;-webkit-text-stroke:0.2px #1a1a1a;">上级</div>
<div style="left:53px;top:822px;width:9px;height:9px;box-sizing:border-box;border:1px solid #9aa3ad;background:linear-gradient(#fff,#e4e8ec)"></div>
<div style="left:55px;top:826px;width:5px;height:1px;background:#2f4f8f"></div>
<div style="left:57px;top:824px;width:1px;height:5px;background:#2f4f8f"></div>
<div style="left:62px;top:826px;width:7px;height:1px;background:repeating-linear-gradient(90deg,#8c8c8c 0 1px,transparent 1px 2px)"></div>
<svg style="left:70px;top:818px" width="14" height="11" viewBox="0 0 14 11"><rect x="5.5" y="0.5" width="7" height="8" fill="#f5e8a0" stroke="#555"/><rect x="1.5" y="3.5" width="7" height="8" fill="#e8eefa" stroke="#555"/><path d="M3 9l3-3M4 6h2v2" stroke="#c03030" stroke-width="1.2" fill="none"/></svg>
<div style="left:7px;top:815px;width:302px;height:14px;overflow:hidden"><div style="left:82px;top:3px;font-size:12px;line-height:16px;color:#1a1a1a;white-space:nowrap">参数信息</div></div>
<div style="left:292px;top:456px;width:16px;height:373px;background:#f0f0f0"></div>
<div style="left:293px;top:503px;width:14px;height:265px;background:#cdcdcd"></div>
<svg style="left:295px;top:461px" width="10" height="7" viewBox="0 0 10 7"><path d="M1 5.5L5 1.5L9 5.5" stroke="#505050" stroke-width="2" fill="none"/></svg>
<svg style="left:295px;top:817px" width="10" height="7" viewBox="0 0 10 7"><path d="M1 1.5L5 5.5L9 1.5" stroke="#505050" stroke-width="2" fill="none"/></svg>
<div style="left:7px;top:829px;width:302px;height:1px;background:#6a6a6a"></div>
<div style="left:2px;top:832px;width:312px;height:24px;background:#eeeeee"></div>
<div style="left:6px;top:833px;width:58px;height:23px;background:#f0f0f0;border-right:1px solid #d8d8d8;box-sizing:border-box"></div>
<div style="left:64px;top:833px;width:57px;height:23px;background:#f0f0f0;border-right:1px solid #d8d8d8;box-sizing:border-box"></div>
<div style="left:121px;top:833px;width:61px;height:23px;background:#ffffff;border-right:1px solid #d8d8d8;box-sizing:border-box"></div>
<div style="left:182px;top:833px;width:56px;height:23px;background:#f0f0f0;border-right:1px solid #d8d8d8;box-sizing:border-box"></div>
<div style="left:238px;top:833px;width:58px;height:23px;background:#f0f0f0;border-right:1px solid #d8d8d8;box-sizing:border-box"></div>
<div style="left:33px;top:836.5px;height:16px;line-height:16px;font-size:12px;color:#1a1a1a;white-space:nowrap;-webkit-text-stroke:0.2px #1a1a1a;">模板</div>
<div style="left:91px;top:836.5px;height:16px;line-height:16px;font-size:12px;color:#1a1a1a;white-space:nowrap;-webkit-text-stroke:0.2px #1a1a1a;">指标</div>
<div style="left:148px;top:836.5px;height:16px;line-height:16px;font-size:12px;color:#111;white-space:nowrap;font-weight:bold">数据</div>
<div style="left:206px;top:836.5px;height:16px;line-height:16px;font-size:12px;color:#1a1a1a;white-space:nowrap;-webkit-text-stroke:0.2px #1a1a1a;">资源</div>
<div style="left:265px;top:836.5px;height:16px;line-height:16px;font-size:12px;color:#1a1a1a;white-space:nowrap;-webkit-text-stroke:0.2px #1a1a1a;">流程</div>
<svg style="left:12px;top:835px" width="15" height="16" viewBox="0 0 15 16"><rect x="0.5" y="0.5" width="8" height="14" fill="#e9eef3" stroke="#8898a8"/><path d="M2 3h5M2 5h5M2 7h5" stroke="#8898a8"/><rect x="5" y="9" width="2.5" height="6" fill="#e94c3d"/><rect x="8" y="6" width="2.5" height="9" fill="#3db34a"/><rect x="11" y="10" width="2.5" height="5" fill="#3a7ed8"/></svg>
<svg style="left:70px;top:835px" width="16" height="16" viewBox="0 0 16 16"><rect x="0.5" y="0.5" width="8" height="14" fill="#e9eef3" stroke="#8898a8"/><path d="M2 3h5M2 5h5M2 7h5M2 9h5" stroke="#8898a8"/><circle cx="12.5" cy="4" r="2" fill="#cde" stroke="#789"/><circle cx="12.5" cy="12" r="2" fill="#cde" stroke="#789"/><path d="M12.5 6v4" stroke="#789"/></svg>
<svg style="left:127px;top:836px" width="15" height="14" viewBox="0 0 15 14"><rect x="4" y="0.5" width="7" height="4" fill="#9ccd3c" stroke="#4a7a1a"/><path d="M7.5 4.5v3M2.5 7.5h10M2.5 7.5v2M7.5 7.5v2M12.5 7.5v2" stroke="#336"/><rect x="0.5" y="9.5" width="4" height="4" fill="#4a90d0" stroke="#235"/><rect x="5.5" y="9.5" width="4" height="4" fill="#4a90d0" stroke="#235"/><rect x="10.5" y="9.5" width="4" height="4" fill="#4a90d0" stroke="#235"/></svg>
<svg style="left:185px;top:835px" width="17" height="15" viewBox="0 0 17 15"><rect x="0.5" y="0.5" width="13" height="9" fill="#eef" stroke="#888"/><circle cx="11" cy="9" r="5" fill="#3a8fd8"/><path d="M8 8c2-1 3 1 5 0M9 12c1-2 3-1 4-2" stroke="#3caa3c" stroke-width="1.5" fill="none"/></svg>
<svg style="left:243px;top:836px" width="15" height="14" viewBox="0 0 15 14"><circle cx="2.5" cy="2.5" r="2" fill="#dde" stroke="#3a6ad0"/><circle cx="12" cy="2.5" r="2" fill="#dde" stroke="#3a6ad0"/><circle cx="12" cy="11" r="2" fill="#dde" stroke="#3a6ad0"/><path d="M4.5 2.5h5.5M7 2.5v8.5h3" stroke="#555" fill="none"/></svg>
<div style="left:316px;top:8px;width:1px;height:848px;background:#d0e0f4"></div>
<div style="left:317px;top:8px;width:2px;height:848px;background:#7098cc"></div>
<div style="left:319px;top:8px;width:1px;height:848px;background:#6090d8"></div>
<div style="left:320px;top:6px;width:768px;height:25px;background:#87a9d8"></div>
<svg style="left:322px;top:6px" width="88" height="26" viewBox="0 0 88 26"><defs><linearGradient id="tg" x1="0" y1="0" x2="0" y2="1"><stop offset="0" stop-color="#fff2dc"/><stop offset="0.4" stop-color="#fdd9a4"/><stop offset="0.5" stop-color="#fcbd5c"/><stop offset="1" stop-color="#ffda7c"/></linearGradient></defs><path d="M1.5 26V6.5Q1.5 1.5 6.5 1.5H62Q67 1.5 70 6Q74 13 78 20Q81 25 87 25V26z" fill="url(#tg)" stroke="#a88450" stroke-width="1"/></svg>
<svg style="left:331px;top:11px" width="17" height="16" viewBox="0 0 17 16"><rect x="0.5" y="0.5" width="15" height="15" rx="1.5" fill="#fff" stroke="#6f9ae0"/><path d="M4 4h8M4 7h8M4 10h6" stroke="#9aa"/><path d="M2.5 4v1M2.5 7v1M2.5 10v1" stroke="#3a3"/><path d="M6 14l1-3 7-7 2 2-7 7z" fill="#f5b830" stroke="#b07010" stroke-width="0.8"/></svg>
<div style="left:350px;top:11.5px;height:16px;line-height:16px;font-size:12px;color:#111;white-space:nowrap;-webkit-text-stroke:0.2px #111;">雇员</div>
<svg style="left:383px;top:14px" width="10" height="10" viewBox="0 0 10 10"><path d="M1.5 1.5L8.5 8.5M8.5 1.5L1.5 8.5" stroke="#111" stroke-width="1.5"/></svg>
<div style="left:320px;top:31px;width:768px;height:825px;background:#fdb85c"></div>
<div style="left:324px;top:34px;width:764px;height:822px;background:#ffffff"></div>
<div style="left:324px;top:34px;width:764px;height:2px;background:#6d6d6d"></div>
<div style="left:324px;top:34px;width:2px;height:716px;background:#6d6d6d"></div>
<div style="left:327px;top:37px;width:120px;height:20px;background:#ececec;border:1px solid #b8b8b8;box-sizing:border-box"></div>
<div style="left:327px;top:39.0px;height:16px;line-height:16px;font-size:14px;color:#111;white-space:nowrap;font-family:'Liberation Serif',serif;width:120px;text-align:center">E6</div>
<div style="left:487px;top:38px;width:18px;height:18px;box-sizing:border-box;border:1px solid #7f9fc8;background:linear-gradient(#e8f0fa,#b8cde8)"></div>
<div style="left:490px;top:39.0px;height:16px;line-height:16px;font-size:13px;color:#555;white-space:nowrap;font-family:'Liberation Serif',serif;font-weight:bold"><i>f</i><span style='font-size:9px'><i>x</i></span></div>
<div style="left:507px;top:37px;width:581px;height:20px;background:#fff;border-left:1px solid #b8b8b8;border-top:1px solid #c8c8c8"></div>
<div style="left:509px;top:39.0px;height:16px;line-height:16px;font-size:14px;color:#111;white-space:nowrap;font-family:'Liberation Mono',monospace;letter-spacing:0.9px">=雇员.雇员ID</div>
<div style="left:326px;top:57px;width:762px;height:1px;background:#6d6d6d"></div>
<div style="left:328px;top:58px;width:40px;height:29px;background:#a9c4e8"></div>
<div style="left:368px;top:58px;width:33px;height:29px;background:#a9c4e8"></div>
<div style="left:401px;top:58px;width:25px;height:29px;background:linear-gradient(#f5f7fa,#dfe6ef)"></div>
<div style="left:401px;top:64.0px;height:16px;line-height:16px;font-size:12px;color:#000;white-space:nowrap;font-family:'Liberation Serif',serif;width:25px;text-align:center">A</div>
<div style="left:427px;top:58px;width:27px;height:29px;background:linear-gradient(#f5f7fa,#dfe6ef)"></div>
<div style="left:427px;top:64.0px;height:16px;line-height:16px;font-size:12px;color:#000;white-space:nowrap;font-family:'Liberation Serif',serif;width:27px;text-align:center">B</div>
<div style="left:455px;top:58px;width:39px;height:29px;background:linear-gradient(#f5f7fa,#dfe6ef)"></div>
<div style="left:455px;top:64.0px;height:16px;line-height:16px;font-size:12px;color:#000;white-space:nowrap;font-family:'Liberation Serif',serif;width:39px;text-align:center">C</div>
<div style="left:495px;top:58px;width:85px;height:29px;background:linear-gradient(#f5f7fa,#dfe6ef)"></div>
<div style="left:495px;top:64.0px;height:16px;line-height:16px;font-size:12px;color:#000;white-space:nowrap;font-family:'Liberation Serif',serif;width:85px;text-align:center">D</div>
<div style="left:581px;top:58px;width:155px;height:29px;background:linear-gradient(#fae3b4,#f4c57a)"></div>
<div style="left:581px;top:64.0px;height:16px;line-height:16px;font-size:12px;color:#000;white-space:nowrap;font-family:'Liberation Serif',serif;width:155px;text-align:center">E</div>
<div style="left:737px;top:58px;width:85px;height:29px;background:linear-gradient(#f5f7fa,#dfe6ef)"></div>
<div style="left:737px;top:64.0px;height:16px;line-height:16px;font-size:12px;color:#000;white-space:nowrap;font-family:'Liberation Serif',serif;width:85px;text-align:center">F</div>
<div style="left:823px;top:58px;width:64px;height:29px;background:linear-gradient(#f5f7fa,#dfe6ef)"></div>
<div style="left:823px;top:64.0px;height:16px;line-height:16px;font-size:12px;color:#000;white-space:nowrap;font-family:'Liberation Serif',serif;width:64px;text-align:center">G</div>
<div style="left:888px;top:58px;width:133px;height:29px;background:linear-gradient(#f5f7fa,#dfe6ef)"></div>
<div style="left:888px;top:64.0px;height:16px;line-height:16px;font-size:12px;color:#000;white-space:nowrap;font-family:'Liberation Serif',serif;width:133px;text-align:center">H</div>
<div style="left:1022px;top:58px;width:64px;height:29px;background:linear-gradient(#f5f7fa,#dfe6ef)"></div>
<div style="left:1022px;top:64.0px;height:16px;line-height:16px;font-size:12px;color:#000;white-space:nowrap;font-family:'Liberation Serif',serif;width:64px;text-align:center">I</div>
<div style="left:328px;top:87px;width:759px;height:1px;background:#a0a0a0"></div>
<div style="left:367px;top:58px;width:1px;height:667px;background:#a0a0a0"></div>
<div style="left:400px;top:58px;width:1px;height:667px;background:#a0a0a0"></div>
<div style="left:426px;top:58px;width:1px;height:29px;background:#a8a8a8"></div>
<div style="left:454px;top:58px;width:1px;height:29px;background:#a8a8a8"></div>
<div style="left:494px;top:58px;width:1px;height:29px;background:#a8a8a8"></div>
<div style="left:580px;top:58px;width:1px;height:29px;background:#a8a8a8"></div>
<div style="left:736px;top:58px;width:1px;height:29px;background:#a8a8a8"></div>
<div style="left:822px;top:58px;width:1px;height:29px;background:#a8a8a8"></div>
<div style="left:887px;top:58px;width:1px;height:29px;background:#a8a8a8"></div>
<div style="left:1021px;top:58px;width:1px;height:29px;background:#a8a8a8"></div>
<div style="left:1086px;top:58px;width:1px;height:29px;background:#a8a8a8"></div>
<div style="left:368px;top:88px;width:32px;height:21px;background:#e4ebf6"></div>
<div style="left:368px;top:109px;width:32px;height:1px;background:#a8a8a8"></div>
<div style="left:367px;top:90.0px;height:16px;line-height:16px;font-size:12px;color:#000;white-space:nowrap;font-family:'Liberation Serif',serif;width:32px;text-align:center">1</div>
<div style="left:368px;top:110px;width:32px;height:21px;background:#e4ebf6"></div>
<div style="left:368px;top:131px;width:32px;height:1px;background:#a8a8a8"></div>
<div style="left:367px;top:112.0px;height:16px;line-height:16px;font-size:12px;color:#000;white-space:nowrap;font-family:'Liberation Serif',serif;width:32px;text-align:center">2</div>
<div style="left:368px;top:132px;width:32px;height:14px;background:#e4ebf6"></div>
<div style="left:368px;top:146px;width:32px;height:1px;background:#a8a8a8"></div>
<div style="left:367px;top:130.5px;height:16px;line-height:16px;font-size:12px;color:#000;white-space:nowrap;font-family:'Liberation Serif',serif;width:32px;text-align:center">3</div>
<div style="left:368px;top:147px;width:32px;height:14px;background:#e4ebf6"></div>
<div style="left:368px;top:161px;width:32px;height:1px;background:#a8a8a8"></div>
<div style="left:367px;top:145.5px;height:16px;line-height:16px;font-size:12px;color:#000;white-space:nowrap;font-family:'Liberation Serif',serif;width:32px;text-align:center">4</div>
<div style="left:368px;top:162px;width:32px;height:21px;background:#e4ebf6"></div>
<div style="left:368px;top:183px;width:32px;height:1px;background:#a8a8a8"></div>
<div style="left:367px;top:164.0px;height:16px;line-height:16px;font-size:12px;color:#000;white-space:nowrap;font-family:'Liberation Serif',serif;width:32px;text-align:center">5</div>
<div style="left:368px;top:184px;width:32px;height:29px;background:#fdd089"></div>
<div style="left:368px;top:213px;width:32px;height:1px;background:#a8a8a8"></div>
<div style="left:367px;top:190.0px;height:16px;line-height:16px;font-size:12px;color:#000;white-space:nowrap;font-family:'Liberation Serif',serif;width:32px;text-align:center">6</div>
<div style="left:368px;top:214px;width:32px;height:29px;background:#e4ebf6"></div>
<div style="left:368px;top:243px;width:32px;height:1px;background:#a8a8a8"></div>
<div style="left:367px;top:220.0px;height:16px;line-height:16px;font-size:12px;color:#000;white-space:nowrap;font-family:'Liberation Serif',serif;width:32px;text-align:center">7</div>
<div style="left:368px;top:244px;width:32px;height:29px;background:#e4ebf6"></div>
<div style="left:368px;top:273px;width:32px;height:1px;background:#a8a8a8"></div>
<div style="left:367px;top:250.0px;height:16px;line-height:16px;font-size:12px;color:#000;white-space:nowrap;font-family:'Liberation Serif',serif;width:32px;text-align:center">8</div>
<div style="left:368px;top:274px;width:32px;height:29px;background:#e4ebf6"></div>
<div style="left:368px;top:303px;width:32px;height:1px;background:#a8a8a8"></div>
<div style="left:367px;top:280.0px;height:16px;line-height:16px;font-size:12px;color:#000;white-space:nowrap;font-family:'Liberation Serif',serif;width:32px;text-align:center">9</div>
<div style="left:368px;top:304px;width:32px;height:29px;background:#e4ebf6"></div>
<div style="left:368px;top:333px;width:32px;height:1px;background:#a8a8a8"></div>
<div style="left:367px;top:310.0px;height:16px;line-height:16px;font-size:12px;color:#000;white-space:nowrap;font-family:'Liberation Serif',serif;width:32px;text-align:center">10</div>
<div style="left:368px;top:334px;width:32px;height:29px;background:#e4ebf6"></div>
<div style="left:368px;top:363px;width:32px;height:1px;background:#a8a8a8"></div>
<div style="left:367px;top:340.0px;height:16px;line-height:16px;font-size:12px;color:#000;white-space:nowrap;font-family:'Liberation Serif',serif;width:32px;text-align:center">11</div>
<div style="left:368px;top:364px;width:32px;height:29px;background:#e4ebf6"></div>
<div style="left:368px;top:393px;width:32px;height:1px;background:#a8a8a8"></div>
<div style="left:367px;top:370.0px;height:16px;line-height:16px;font-size:12px;color:#000;white-space:nowrap;font-family:'Liberation Serif',serif;width:32px;text-align:center">12</div>
<div style="left:368px;top:394px;width:32px;height:29px;background:#e4ebf6"></div>
<div style="left:368px;top:423px;width:32px;height:1px;background:#a8a8a8"></div>
<div style="left:367px;top:400.0px;height:16px;line-height:16px;font-size:12px;color:#000;white-space:nowrap;font-family:'Liberation Serif',serif;width:32px;text-align:center">13</div>
<div style="left:368px;top:424px;width:32px;height:14px;background:#e4ebf6"></div>
<div style="left:368px;top:438px;width:32px;height:1px;background:#a8a8a8"></div>
<div style="left:367px;top:422.5px;height:16px;line-height:16px;font-size:12px;color:#000;white-space:nowrap;font-family:'Liberation Serif',serif;width:32px;text-align:center">14</div>
<div style="left:368px;top:439px;width:32px;height:14px;background:#e4ebf6"></div>
<div style="left:368px;top:453px;width:32px;height:1px;background:#a8a8a8"></div>
<div style="left:367px;top:437.5px;height:16px;line-height:16px;font-size:12px;color:#000;white-space:nowrap;font-family:'Liberation Serif',serif;width:32px;text-align:center">15</div>
<div style="left:368px;top:454px;width:32px;height:21px;background:#e4ebf6"></div>
<div style="left:368px;top:475px;width:32px;height:1px;background:#a8a8a8"></div>
<div style="left:367px;top:456.0px;height:16px;line-height:16px;font-size:12px;color:#000;white-space:nowrap;font-family:'Liberation Serif',serif;width:32px;text-align:center">16</div>
<div style="left:368px;top:476px;width:32px;height:29px;background:#e4ebf6"></div>
<div style="left:368px;top:505px;width:32px;height:1px;background:#a8a8a8"></div>
<div style="left:367px;top:482.0px;height:16px;line-height:16px;font-size:12px;color:#000;white-space:nowrap;font-family:'Liberation Serif',serif;width:32px;text-align:center">17</div>
<div style="left:368px;top:506px;width:32px;height:34px;background:#e4ebf6"></div>
<div style="left:368px;top:540px;width:32px;height:1px;background:#a8a8a8"></div>
<div style="left:367px;top:514.5px;height:16px;line-height:16px;font-size:12px;color:#000;white-space:nowrap;font-family:'Liberation Serif',serif;width:32px;text-align:center">18</div>
<div style="left:368px;top:541px;width:32px;height:34px;background:#e4ebf6"></div>
<div style="left:368px;top:575px;width:32px;height:1px;background:#a8a8a8"></div>
<div style="left:367px;top:549.5px;height:16px;line-height:16px;font-size:12px;color:#000;white-space:nowrap;font-family:'Liberation Serif',serif;width:32px;text-align:center">19</div>
<div style="left:368px;top:576px;width:32px;height:34px;background:#e4ebf6"></div>
<div style="left:368px;top:610px;width:32px;height:1px;background:#a8a8a8"></div>
<div style="left:367px;top:584.5px;height:16px;line-height:16px;font-size:12px;color:#000;white-space:nowrap;font-family:'Liberation Serif',serif;width:32px;text-align:center">20</div>
<div style="left:368px;top:611px;width:32px;height:34px;background:#e4ebf6"></div>
<div style="left:368px;top:645px;width:32px;height:1px;background:#a8a8a8"></div>
<div style="left:367px;top:619.5px;height:16px;line-height:16px;font-size:12px;color:#000;white-space:nowrap;font-family:'Liberation Serif',serif;width:32px;text-align:center">21</div>
<div style="left:368px;top:646px;width:32px;height:34px;background:#e4ebf6"></div>
<div style="left:368px;top:680px;width:32px;height:1px;background:#a8a8a8"></div>
<div style="left:367px;top:654.5px;height:16px;line-height:16px;font-size:12px;color:#000;white-space:nowrap;font-family:'Liberation Serif',serif;width:32px;text-align:center">22</div>
<div style="left:368px;top:681px;width:32px;height:21px;background:#e4ebf6"></div>
<div style="left:368px;top:702px;width:32px;height:1px;background:#a8a8a8"></div>
<div style="left:367px;top:683.0px;height:16px;line-height:16px;font-size:12px;color:#000;white-space:nowrap;font-family:'Liberation Serif',serif;width:32px;text-align:center">23</div>
<div style="left:368px;top:703px;width:32px;height:21px;background:#e4ebf6"></div>
<div style="left:368px;top:724px;width:32px;height:1px;background:#a8a8a8"></div>
<div style="left:367px;top:705.0px;height:16px;line-height:16px;font-size:12px;color:#000;white-space:nowrap;font-family:'Liberation Serif',serif;width:32px;text-align:center">24</div>
<div style="left:328px;top:88px;width:39px;height:637px;background:#e4ebf6"></div>
<div style="left:328px;top:109px;width:39px;height:1px;background:#a8a8a8"></div>
<div style="left:328px;top:131px;width:39px;height:1px;background:#a8a8a8"></div>
<div style="left:328px;top:161px;width:39px;height:1px;background:#a8a8a8"></div>
<div style="left:328px;top:183px;width:39px;height:1px;background:#a8a8a8"></div>
<div style="left:328px;top:213px;width:39px;height:1px;background:#a8a8a8"></div>
<div style="left:328px;top:243px;width:39px;height:1px;background:#a8a8a8"></div>
<div style="left:328px;top:273px;width:39px;height:1px;background:#a8a8a8"></div>
<div style="left:328px;top:303px;width:39px;height:1px;background:#a8a8a8"></div>
<div style="left:328px;top:333px;width:39px;height:1px;background:#a8a8a8"></div>
<div style="left:328px;top:363px;width:39px;height:1px;background:#a8a8a8"></div>
<div style="left:328px;top:393px;width:39px;height:1px;background:#a8a8a8"></div>
<div style="left:328px;top:423px;width:39px;height:1px;background:#a8a8a8"></div>
<div style="left:328px;top:438px;width:39px;height:1px;background:#a8a8a8"></div>
<div style="left:328px;top:453px;width:39px;height:1px;background:#a8a8a8"></div>
<div style="left:328px;top:475px;width:39px;height:1px;background:#a8a8a8"></div>
<div style="left:328px;top:505px;width:39px;height:1px;background:#a8a8a8"></div>
<div style="left:328px;top:540px;width:39px;height:1px;background:#a8a8a8"></div>
<div style="left:328px;top:575px;width:39px;height:1px;background:#a8a8a8"></div>
<div style="left:328px;top:610px;width:39px;height:1px;background:#a8a8a8"></div>
<div style="left:328px;top:645px;width:39px;height:1px;background:#a8a8a8"></div>
<div style="left:328px;top:680px;width:39px;height:1px;background:#a8a8a8"></div>
<div style="left:328px;top:702px;width:39px;height:1px;background:#a8a8a8"></div>
<div style="left:328px;top:724px;width:39px;height:1px;background:#a8a8a8"></div>
<div style="left:328px;top:184px;width:39px;height:29px;background:#fdd089"></div>
<div style="left:327px;top:138.0px;height:16px;line-height:16px;font-size:12px;color:#111;white-space:nowrap;-webkit-text-stroke:0.2px #111;width:39px;text-align:center">页头</div>
<div style="left:327px;top:705.0px;height:16px;line-height:16px;font-size:12px;color:#111;white-space:nowrap;-webkit-text-stroke:0.2px #111;width:39px;text-align:center">页尾</div>
<div style="left:327px;top:58px;width:1px;height:667px;background:#707070"></div>
<div style="left:401px;top:109px;width:686px;height:1px;background:#c6c6c6"></div>
<div style="left:401px;top:131px;width:686px;height:1px;background:#c6c6c6"></div>
<div style="left:401px;top:146px;width:686px;height:1px;background:#c6c6c6"></div>
<div style="left:401px;top:161px;width:686px;height:1px;background:#c6c6c6"></div>
<div style="left:401px;top:183px;width:686px;height:1px;background:#c6c6c6"></div>
<div style="left:401px;top:213px;width:686px;height:1px;background:#c6c6c6"></div>
<div style="left:401px;top:243px;width:686px;height:1px;background:#c6c6c6"></div>
<div style="left:401px;top:273px;width:686px;height:1px;background:#c6c6c6"></div>
<div style="left:401px;top:303px;width:686px;height:1px;background:#c6c6c6"></div>
<div style="left:401px;top:333px;width:686px;height:1px;background:#c6c6c6"></div>
<div style="left:401px;top:363px;width:686px;height:1px;background:#c6c6c6"></div>
<div style="left:401px;top:393px;width:686px;height:1px;background:#c6c6c6"></div>
<div style="left:401px;top:423px;width:686px;height:1px;background:#c6c6c6"></div>
<div style="left:401px;top:438px;width:686px;height:1px;background:#c6c6c6"></div>
<div style="left:401px;top:453px;width:686px;height:1px;background:#c6c6c6"></div>
<div style="left:401px;top:475px;width:686px;height:1px;background:#c6c6c6"></div>
<div style="left:401px;top:505px;width:686px;height:1px;background:#c6c6c6"></div>
<div style="left:401px;top:540px;width:686px;height:1px;background:#c6c6c6"></div>
<div style="left:401px;top:575px;width:686px;height:1px;background:#c6c6c6"></div>
<div style="left:401px;top:610px;width:686px;height:1px;background:#c6c6c6"></div>
<div style="left:401px;top:645px;width:686px;height:1px;background:#c6c6c6"></div>
<div style="left:401px;top:680px;width:686px;height:1px;background:#c6c6c6"></div>
<div style="left:401px;top:702px;width:686px;height:1px;background:#c6c6c6"></div>
<div style="left:401px;top:724px;width:686px;height:1px;background:#c6c6c6"></div>
<div style="left:426px;top:88px;width:1px;height:637px;background:#c6c6c6"></div>
<div style="left:454px;top:88px;width:1px;height:637px;background:#c6c6c6"></div>
<div style="left:494px;top:88px;width:1px;height:637px;background:#c6c6c6"></div>
<div style="left:580px;top:88px;width:1px;height:637px;background:#c6c6c6"></div>
<div style="left:736px;top:88px;width:1px;height:637px;background:#c6c6c6"></div>
<div style="left:822px;top:88px;width:1px;height:637px;background:#c6c6c6"></div>
<div style="left:887px;top:88px;width:1px;height:637px;background:#c6c6c6"></div>
<div style="left:1021px;top:88px;width:1px;height:637px;background:#c6c6c6"></div>
<div style="left:1086px;top:88px;width:1px;height:637px;background:#c6c6c6"></div>
<div style="left:455px;top:88px;width:631px;height:43px;background:#fff"></div>
<div style="left:495px;top:132px;width:85px;height:29px;background:#fff"></div>
<div style="left:581px;top:184px;width:306px;height:29px;background:#fff"></div>
<div style="left:581px;top:214px;width:306px;height:29px;background:#fff"></div>
<div style="left:581px;top:244px;width:306px;height:29px;background:#fff"></div>
<div style="left:581px;top:274px;width:306px;height:29px;background:#fff"></div>
<div style="left:581px;top:304px;width:306px;height:29px;background:#fff"></div>
<div style="left:581px;top:334px;width:306px;height:29px;background:#fff"></div>
<div style="left:581px;top:364px;width:306px;height:29px;background:#fff"></div>
<div style="left:888px;top:184px;width:133px;height:209px;background:#f2f5f7"></div>
<div style="left:495px;top:184px;width:85px;height:29px;background:#f2f5f7"></div>
<div style="left:495px;top:214px;width:85px;height:29px;background:#f2f5f7"></div>
<div style="left:495px;top:244px;width:85px;height:29px;background:#f2f5f7"></div>
<div style="left:495px;top:274px;width:85px;height:29px;background:#f2f5f7"></div>
<div style="left:495px;top:304px;width:85px;height:29px;background:#f2f5f7"></div>
<div style="left:495px;top:334px;width:85px;height:29px;background:#f2f5f7"></div>
<div style="left:495px;top:364px;width:85px;height:29px;background:#f2f5f7"></div>
<div style="left:495px;top:424px;width:85px;height:29px;background:#fff"></div>
<div style="left:495px;top:476px;width:85px;height:29px;background:#f2f5f7"></div>
<div style="left:495px;top:506px;width:85px;height:34px;background:#f2f5f7"></div>
<div style="left:495px;top:541px;width:85px;height:34px;background:#f2f5f7"></div>
<div style="left:495px;top:576px;width:85px;height:34px;background:#f2f5f7"></div>
<div style="left:495px;top:611px;width:85px;height:34px;background:#f2f5f7"></div>
<div style="left:495px;top:646px;width:85px;height:34px;background:#f2f5f7"></div>
<div style="left:581px;top:476px;width:440px;height:29px;background:#fff"></div>
<div style="left:737px;top:506px;width:85px;height:34px;background:#f2f5f7"></div>
<div style="left:737px;top:541px;width:85px;height:34px;background:#f2f5f7"></div>
<div style="left:737px;top:576px;width:85px;height:34px;background:#f2f5f7"></div>
<div style="left:737px;top:611px;width:85px;height:34px;background:#f2f5f7"></div>
<div style="left:737px;top:646px;width:85px;height:34px;background:#f2f5f7"></div>
<div style="left:823px;top:506px;width:198px;height:34px;background:#fff"></div>
<div style="left:823px;top:541px;width:198px;height:34px;background:#fff"></div>
<div style="left:823px;top:576px;width:198px;height:104px;background:#fff"></div>
<div style="left:494px;top:183px;width:527px;height:1px;background:#dde3e7"></div>
<div style="left:494px;top:213px;width:527px;height:1px;background:#dde3e7"></div>
<div style="left:494px;top:243px;width:527px;height:1px;background:#dde3e7"></div>
<div style="left:494px;top:273px;width:527px;height:1px;background:#dde3e7"></div>
<div style="left:494px;top:303px;width:527px;height:1px;background:#dde3e7"></div>
<div style="left:494px;top:333px;width:527px;height:1px;background:#dde3e7"></div>
<div style="left:494px;top:363px;width:527px;height:1px;background:#dde3e7"></div>
<div style="left:494px;top:393px;width:527px;height:1px;background:#dde3e7"></div>
<div style="left:494px;top:183px;width:1px;height:211px;background:#dde3e7"></div>
<div style="left:580px;top:183px;width:1px;height:211px;background:#dde3e7"></div>
<div style="left:494px;top:475px;width:527px;height:1px;background:#dde3e7"></div>
<div style="left:494px;top:505px;width:527px;height:1px;background:#dde3e7"></div>
<div style="left:494px;top:540px;width:527px;height:1px;background:#dde3e7"></div>
<div style="left:494px;top:575px;width:527px;height:1px;background:#dde3e7"></div>
<div style="left:494px;top:610px;width:527px;height:1px;background:#dde3e7"></div>
<div style="left:494px;top:645px;width:527px;height:1px;background:#dde3e7"></div>
<div style="left:494px;top:680px;width:527px;height:1px;background:#dde3e7"></div>
<div style="left:494px;top:475px;width:1px;height:206px;background:#dde3e7"></div>
<div style="left:580px;top:475px;width:1px;height:206px;background:#dde3e7"></div>
<div style="left:888px;top:184px;width:133px;height:209px;background:#f2f5f7"></div>
<div style="left:823px;top:576px;width:198px;height:104px;background:#fff"></div>
<div style="left:887px;top:184px;width:1px;height:209px;background:#dde3e7"></div>
<div style="left:736px;top:506px;width:1px;height:174px;background:#dde3e7"></div>
<div style="left:822px;top:506px;width:1px;height:174px;background:#dde3e7"></div>
<div style="left:494px;top:132px;width:1px;height:29px;background:#eef2f2"></div>
<div style="left:494px;top:424px;width:1px;height:29px;background:#eef2f2"></div>
<div style="left:581px;top:146px;width:440px;height:1px;background:#eef3f3"></div>
<div style="left:581px;top:438px;width:440px;height:1px;background:#eef3f3"></div>
<div style="left:454px;top:102.0px;height:16px;line-height:16px;font-size:20px;color:#333;white-space:nowrap;width:632px;text-align:center;font-weight:bold">雇员</div>
<div style="left:495px;top:138.0px;height:16px;line-height:16px;font-size:12px;color:#000;white-space:nowrap;width:85px;text-align:center;font-weight:bold;letter-spacing:2px">公司信息</div>
<div style="left:495px;top:429.5px;height:16px;line-height:16px;font-size:12px;color:#000;white-space:nowrap;width:85px;text-align:center;font-weight:bold;letter-spacing:2px">个人信息</div>
<div style="left:495px;top:191.0px;height:16px;line-height:16px;font-size:12px;color:#333;white-space:nowrap;-webkit-text-stroke:0.2px #333;width:77px;text-align:center">雇员ID:</div>
<div style="left:581px;top:191.0px;height:16px;line-height:16px;font-size:12px;color:#333;white-space:nowrap;-webkit-text-stroke:0.2px #333;width:306px;text-align:center">=雇员.雇员ID</div>
<div style="left:495px;top:221.0px;height:16px;line-height:16px;font-size:12px;color:#333;white-space:nowrap;-webkit-text-stroke:0.2px #333;width:77px;text-align:center">姓氏:</div>
<div style="left:581px;top:221.0px;height:16px;line-height:16px;font-size:12px;color:#333;white-space:nowrap;-webkit-text-stroke:0.2px #333;width:306px;text-align:center">=雇员.姓氏</div>
<div style="left:495px;top:251.0px;height:16px;line-height:16px;font-size:12px;color:#333;white-space:nowrap;-webkit-text-stroke:0.2px #333;width:77px;text-align:center">名字:</div>
<div style="left:581px;top:251.0px;height:16px;line-height:16px;font-size:12px;color:#333;white-space:nowrap;-webkit-text-stroke:0.2px #333;width:306px;text-align:center">=雇员.名字</div>
<div style="left:495px;top:281.0px;height:16px;line-height:16px;font-size:12px;color:#333;white-space:nowrap;-webkit-text-stroke:0.2px #333;width:77px;text-align:center">职务:</div>
<div style="left:581px;top:281.0px;height:16px;line-height:16px;font-size:12px;color:#333;white-space:nowrap;-webkit-text-stroke:0.2px #333;width:306px;text-align:center">=雇员.职务</div>
<div style="left:495px;top:311.0px;height:16px;line-height:16px;font-size:12px;color:#333;white-space:nowrap;-webkit-text-stroke:0.2px #333;width:77px;text-align:center">上级:</div>
<div style="left:647px;top:311.0px;height:16px;line-height:16px;font-size:12px;color:#333;white-space:nowrap;-webkit-text-stroke:0.2px #333;">=if(雇员.上级<span style='margin-left:2px;letter-spacing:1px'>==</span><span style='margin-left:1px'>0,</span></div>
<div style="left:495px;top:341.0px;height:16px;line-height:16px;font-size:12px;color:#333;white-space:nowrap;-webkit-text-stroke:0.2px #333;width:77px;text-align:center">雇用日期:</div>
<div style="left:581px;top:341.0px;height:16px;line-height:16px;font-size:12px;color:#333;white-space:nowrap;-webkit-text-stroke:0.2px #333;width:306px;text-align:center">=雇员.雇用日期</div>
<div style="left:495px;top:371.0px;height:16px;line-height:16px;font-size:12px;color:#333;white-space:nowrap;-webkit-text-stroke:0.2px #333;width:77px;text-align:center">分机:</div>
<div style="left:581px;top:371.0px;height:16px;line-height:16px;font-size:12px;color:#333;white-space:nowrap;-webkit-text-stroke:0.2px #333;width:306px;text-align:center">=雇员.分机</div>
<div style="left:888px;top:281.0px;height:16px;line-height:16px;font-size:12px;color:#333;white-space:nowrap;-webkit-text-stroke:0.2px #333;width:133px;text-align:center">=雇员.照片</div>
<div style="left:495px;top:482.5px;height:16px;line-height:16px;font-size:12px;color:#333;white-space:nowrap;-webkit-text-stroke:0.2px #333;width:76px;text-align:right">地址:</div>
<div style="left:495px;top:515.0px;height:16px;line-height:16px;font-size:12px;color:#333;white-space:nowrap;-webkit-text-stroke:0.2px #333;width:76px;text-align:right">城市:</div>
<div style="left:581px;top:514.5px;height:16px;line-height:16px;font-size:12px;color:#333;white-space:nowrap;-webkit-text-stroke:0.2px #333;width:156px;text-align:center">=雇员.城市</div>
<div style="left:495px;top:550.0px;height:16px;line-height:16px;font-size:12px;color:#333;white-space:nowrap;-webkit-text-stroke:0.2px #333;width:76px;text-align:right">邮政编码:</div>
<div style="left:581px;top:549.5px;height:16px;line-height:16px;font-size:12px;color:#333;white-space:nowrap;-webkit-text-stroke:0.2px #333;width:156px;text-align:center">=雇员.邮政编码</div>
<div style="left:495px;top:585.0px;height:16px;line-height:16px;font-size:12px;color:#333;white-space:nowrap;-webkit-text-stroke:0.2px #333;width:76px;text-align:right">家庭电话:</div>
<div style="left:581px;top:584.5px;height:16px;line-height:16px;font-size:12px;color:#333;white-space:nowrap;-webkit-text-stroke:0.2px #333;width:156px;text-align:center">=雇员.家庭电话</div>
<div style="left:495px;top:620.0px;height:16px;line-height:16px;font-size:12px;color:#333;white-space:nowrap;-webkit-text-stroke:0.2px #333;width:76px;text-align:right">尊称:</div>
<div style="left:581px;top:619.5px;height:16px;line-height:16px;font-size:12px;color:#333;white-space:nowrap;-webkit-text-stroke:0.2px #333;width:156px;text-align:center">=雇员.尊称</div>
<div style="left:495px;top:655.0px;height:16px;line-height:16px;font-size:12px;color:#333;white-space:nowrap;-webkit-text-stroke:0.2px #333;width:76px;text-align:right">出生日期:</div>
<div style="left:581px;top:654.5px;height:16px;line-height:16px;font-size:12px;color:#333;white-space:nowrap;-webkit-text-stroke:0.2px #333;width:156px;text-align:center">=雇员.出生日期</div>
<div style="left:823px;top:514.0px;height:16px;line-height:16px;font-size:12px;color:#333;white-space:nowrap;-webkit-text-stroke:0.2px #333;width:198px;text-align:center">=雇员.地区</div>
<div style="left:823px;top:549.0px;height:16px;line-height:16px;font-size:12px;color:#333;white-space:nowrap;-webkit-text-stroke:0.2px #333;width:198px;text-align:center">=雇员.国家</div>
<div style="left:719px;top:527px;width:16px;height:12px;box-sizing:border-box;border:1px solid #7a7a7a;background:#f4f4f4"></div>
<div style="left:721px;top:530px;width:3px;height:6px;border-top:1px solid #222;border-bottom:1px solid #222;box-sizing:border-box"></div><div style="left:722px;top:530px;width:1px;height:6px;background:#222"></div><div style="left:725px;top:534px;width:7px;height:1px;background:repeating-linear-gradient(90deg,#444 0 1px,transparent 1px 2px)"></div>
<div style="left:719px;top:562px;width:16px;height:12px;box-sizing:border-box;border:1px solid #7a7a7a;background:#f4f4f4"></div>
<div style="left:721px;top:565px;width:3px;height:6px;border-top:1px solid #222;border-bottom:1px solid #222;box-sizing:border-box"></div><div style="left:722px;top:565px;width:1px;height:6px;background:#222"></div><div style="left:725px;top:569px;width:7px;height:1px;background:repeating-linear-gradient(90deg,#444 0 1px,transparent 1px 2px)"></div>
<div style="left:719px;top:597px;width:16px;height:12px;box-sizing:border-box;border:1px solid #7a7a7a;background:#f4f4f4"></div>
<div style="left:721px;top:600px;width:3px;height:6px;border-top:1px solid #222;border-bottom:1px solid #222;box-sizing:border-box"></div><div style="left:722px;top:600px;width:1px;height:6px;background:#222"></div><div style="left:725px;top:604px;width:7px;height:1px;background:repeating-linear-gradient(90deg,#444 0 1px,transparent 1px 2px)"></div>
<div style="left:719px;top:632px;width:16px;height:12px;box-sizing:border-box;border:1px solid #7a7a7a;background:#f4f4f4"></div>
<div style="left:721px;top:635px;width:3px;height:6px;border-top:1px solid #222;border-bottom:1px solid #222;box-sizing:border-box"></div><div style="left:722px;top:635px;width:1px;height:6px;background:#222"></div><div style="left:725px;top:639px;width:7px;height:1px;background:repeating-linear-gradient(90deg,#444 0 1px,transparent 1px 2px)"></div>
<div style="left:719px;top:666px;width:16px;height:12px;box-sizing:border-box;border:1px solid #7a7a7a;background:#f4f4f4"></div>
<svg style="left:719px;top:666px" width="16" height="13" viewBox="0 0 16 13"><rect x="0.5" y="0.5" width="15" height="12" fill="#f4f4f4" stroke="#9a9a9a"/><rect x="3" y="2" width="10" height="9" fill="#6a6a6a"/><path d="M4 3.5h2M10 3.5h2" stroke="#ddd"/><text x="8" y="10.3" font-size="6" font-family="Liberation Sans" font-weight="bold" fill="#e8e8e8" text-anchor="middle">31</text></svg>
<div style="left:1004px;top:491px;width:16px;height:12px;box-sizing:border-box;border:1px solid #7a7a7a;background:#f4f4f4"></div>
<div style="left:1006px;top:494px;width:3px;height:6px;border-top:1px solid #222;border-bottom:1px solid #222;box-sizing:border-box"></div><div style="left:1007px;top:494px;width:1px;height:6px;background:#222"></div><div style="left:1010px;top:498px;width:7px;height:1px;background:repeating-linear-gradient(90deg,#444 0 1px,transparent 1px 2px)"></div>
<div style="left:1004px;top:526px;width:16px;height:12px;box-sizing:border-box;border:1px solid #7a7a7a;background:#f4f4f4"></div>
<div style="left:1006px;top:529px;width:3px;height:6px;border-top:1px solid #222;border-bottom:1px solid #222;box-sizing:border-box"></div><div style="left:1007px;top:529px;width:1px;height:6px;background:#222"></div><div style="left:1010px;top:533px;width:7px;height:1px;background:repeating-linear-gradient(90deg,#444 0 1px,transparent 1px 2px)"></div>
<div style="left:1004px;top:561px;width:16px;height:12px;box-sizing:border-box;border:1px solid #7a7a7a;background:#f4f4f4"></div>
<div style="left:1006px;top:564px;width:3px;height:6px;border-top:1px solid #222;border-bottom:1px solid #222;box-sizing:border-box"></div><div style="left:1007px;top:564px;width:1px;height:6px;background:#222"></div><div style="left:1010px;top:568px;width:7px;height:1px;background:repeating-linear-gradient(90deg,#444 0 1px,transparent 1px 2px)"></div>
<div style="left:1004px;top:667px;width:16px;height:12px;box-sizing:border-box;border:1px solid #7a7a7a;background:#f4f4f4"></div>
<svg style="left:1004px;top:667px" width="16" height="13" viewBox="0 0 16 13"><rect x="0.5" y="0.5" width="15" height="12" fill="#f4f4f4" stroke="#9a9a9a"/><path d="M8 2H12.5V3.5H11.5V11.5H10V3.5H9.5V11.5H8V7.5Q4 7.5 4 4.7Q4 2 8 2z" fill="#111"/></svg>
<div style="left:1004px;top:379px;width:16px;height:12px;box-sizing:border-box;border:1px solid #7a7a7a;background:#f4f4f4"></div>
<svg style="left:1004px;top:379px" width="16" height="13" viewBox="0 0 16 13"><rect x="0.5" y="0.5" width="15" height="12" fill="#f6f6f6" stroke="#9a9a9a"/><rect x="3" y="2.5" width="6" height="2" fill="#e8e8e8" stroke="#555" stroke-width="0.8"/><rect x="3" y="5.5" width="6" height="2" fill="#e8e8e8" stroke="#555" stroke-width="0.8"/><rect x="3" y="8.5" width="6" height="2" fill="#e8e8e8" stroke="#555" stroke-width="0.8"/><path d="M12 4L15 7.5H13.2V12H10.8V7.5H9z" fill="#3aa8f0"/></svg>
<div style="left:579px;top:182px;width:310px;height:33px;box-sizing:border-box;border:3px solid #000"></div>
<div style="left:1021px;top:88px;width:1px;height:637px;background:repeating-linear-gradient(#f01818 0 4px,transparent 4px 6px)"></div>
<div style="left:401px;top:702px;width:686px;height:1px;background:repeating-linear-gradient(90deg,#f01818 0 4px,transparent 4px 6px)"></div>
<div style="left:401px;top:724px;width:686px;height:1px;background:repeating-linear-gradient(90deg,#f01818 0 4px,transparent 4px 6px)"></div>
<div style="left:1086px;top:58px;width:2px;height:692px;background:#b4b4b4"></div>
<div style="left:326px;top:725px;width:762px;height:8px;background:#c0c0c0"></div>
<div style="left:326px;top:733px;width:762px;height:16px;background:linear-gradient(#b6cdea,#98b6de)"></div>
<div style="left:326px;top:733px;width:88px;height:16px;background:linear-gradient(#dfe9f7,#bcd0ec)"></div>
<svg style="left:330px;top:736px" width="82" height="11" viewBox="0 0 82 11"><path d="M2 1.5v8" stroke="#5b4fd0" stroke-width="1.4"/><path d="M8 1.5L3.5 5.5L8 9.5z" fill="#5b4fd0"/><path d="M25 1.5L20.5 5.5L25 9.5z" fill="#5b4fd0"/><path d="M38 1.5L42.5 5.5L38 9.5z" fill="#5b4fd0"/><path d="M55 1.5L59.5 5.5L55 9.5z" fill="#5b4fd0"/><path d="M61 1.5v8" stroke="#5b4fd0" stroke-width="1.4"/><path d="M72 5.5h8M76 1.5v8" stroke="#5b4fd0" stroke-width="2"/></svg>
<svg style="left:413px;top:733px" width="60" height="16" viewBox="0 0 60 16"><path d="M0.5 0V15.5H45L58.5 0" fill="#fff" stroke="#8aa0c0"/></svg>
<div style="left:419px;top:733.0px;height:16px;line-height:16px;font-size:12px;color:#000;white-space:nowrap;font-family:'Liberation Serif',serif;letter-spacing:0.6px">Sheet1</div>
<div style="left:985px;top:734px;width:3px;height:14px;background:#dfe8f4;border-left:1px solid #9ab"></div>
<div style="left:990px;top:734px;width:16px;height:14px;background:linear-gradient(#e8f0fa,#c4d6ee);border:1px solid #7a96c0;box-sizing:border-box"></div>
<svg style="left:994px;top:736px" width="8" height="10" viewBox="0 0 8 10"><path d="M6 1L1.5 5L6 9z" fill="#2c3e5c"/></svg>
<div style="left:1006px;top:733px;width:64px;height:16px;background:#7397c4"></div>
<div style="left:1070px;top:734px;width:18px;height:14px;background:linear-gradient(#e8f0fa,#c4d6ee);border:1px solid #7a96c0;box-sizing:border-box"></div>
<div style="left:326px;top:749px;width:762px;height:1px;background:#555"></div>
<div style="left:335px;top:760px;width:266px;height:59px;box-sizing:border-box;border:1px solid #d9d9d9"></div>
<div style="left:341px;top:752px;padding:0 2px;background:#fff;font-size:12px;line-height:16px;color:#111">单元格类型</div>
<div style="left:348px;top:772.5px;width:13px;height:13px;box-sizing:border-box;border:1px solid #333;border-radius:50%;background:#fff"></div>
<div style="left:351px;top:775.5px;width:7px;height:7px;border-radius:50%;background:#222"></div>
<div style="left:364px;top:771.5px;height:16px;line-height:16px;font-size:12px;color:#111;white-space:nowrap;-webkit-text-stroke:0.2px #111;">普通格</div>
<div style="left:411px;top:772.5px;width:13px;height:13px;box-sizing:border-box;border:1px solid #333;border-radius:50%;background:#fff"></div>
<div style="left:427px;top:771.5px;height:16px;line-height:16px;font-size:12px;color:#111;white-space:nowrap;-webkit-text-stroke:0.2px #111;">普通导航格</div>
<div style="left:500px;top:772.5px;width:13px;height:13px;box-sizing:border-box;border:1px solid #333;border-radius:50%;background:#fff"></div>
<div style="left:516px;top:771.5px;height:16px;line-height:16px;font-size:12px;color:#111;white-space:nowrap;-webkit-text-stroke:0.2px #111;">树型导航格</div>
<div style="left:611px;top:760px;width:209px;height:58px;box-sizing:border-box;border:1px solid #d9d9d9"></div>
<div style="left:618px;top:752px;padding:0 2px;background:#fff;font-size:12px;line-height:16px;color:#111">搜寻导航格</div>
<div style="left:626px;top:772.5px;height:16px;line-height:16px;font-size:12px;color:#111;white-space:nowrap;-webkit-text-stroke:0.2px #111;">纵向搜寻:</div>
<div style="left:626px;top:795.0px;height:16px;line-height:16px;font-size:12px;color:#111;white-space:nowrap;-webkit-text-stroke:0.2px #111;">横向搜寻:</div>
<div style="left:693px;top:768px;width:108px;height:24px;box-sizing:border-box;border:1px solid #7a7a7a;background:#fff"></div>
<div style="left:698px;top:772.5px;height:16px;line-height:16px;font-size:12px;color:#111;white-space:nowrap;-webkit-text-stroke:0.2px #111;">先上后下</div>
<svg style="left:787px;top:777px" width="10" height="6" viewBox="0 0 10 6"><path d="M1 1L5 5L9 1" stroke="#444" stroke-width="1.1" fill="none"/></svg>
<div style="left:693px;top:792px;width:108px;height:24px;box-sizing:border-box;border:1px solid #7a7a7a;background:#fff"></div>
<div style="left:698px;top:796.5px;height:16px;line-height:16px;font-size:12px;color:#111;white-space:nowrap;-webkit-text-stroke:0.2px #111;">先左后右</div>
<svg style="left:787px;top:801px" width="10" height="6" viewBox="0 0 10 6"><path d="M1 1L5 5L9 1" stroke="#444" stroke-width="1.1" fill="none"/></svg>
<div style="left:335px;top:832px;width:13px;height:13px;box-sizing:border-box;border:1px solid #333;background:#fff"></div>
<div style="left:350px;top:831.0px;height:16px;line-height:16px;font-size:12px;color:#111;white-space:nowrap;-webkit-text-stroke:0.2px #111;">统计格</div>
<div style="left:748px;top:204px;width:195px;height:548px;background:rgba(0,0,0,0.18);filter:blur(1.5px)"></div>
<div style="left:746px;top:202px;width:193px;height:546px;box-sizing:border-box;border:1px solid #868686;background:#fafafa"></div>
<div style="left:747px;top:203px;width:29px;height:544px;background:#e9eef0"></div>
<div style="left:776px;top:203px;width:1px;height:544px;background:#c5c5c5"></div>
<div style="left:777px;top:203px;width:1px;height:544px;background:#f5f5f5"></div>
<div style="left:785px;top:303px;width:152px;height:1px;background:#c5c5c5"></div>
<div style="left:785px;top:304px;width:152px;height:1px;background:#ffffff"></div>
<div style="left:785px;top:405px;width:152px;height:1px;background:#c5c5c5"></div>
<div style="left:785px;top:406px;width:152px;height:1px;background:#ffffff"></div>
<div style="left:785px;top:457px;width:152px;height:1px;background:#c5c5c5"></div>
<div style="left:785px;top:458px;width:152px;height:1px;background:#ffffff"></div>
<div style="left:785px;top:509px;width:152px;height:1px;background:#c5c5c5"></div>
<div style="left:785px;top:510px;width:152px;height:1px;background:#ffffff"></div>
<div style="left:785px;top:561px;width:152px;height:1px;background:#c5c5c5"></div>
<div style="left:785px;top:562px;width:152px;height:1px;background:#ffffff"></div>
<div style="left:785px;top:588px;width:152px;height:1px;background:#c5c5c5"></div>
<div style="left:785px;top:589px;width:152px;height:1px;background:#ffffff"></div>
<div style="left:785px;top:615px;width:152px;height:1px;background:#c5c5c5"></div>
<div style="left:785px;top:616px;width:152px;height:1px;background:#ffffff"></div>
<div style="left:785px;top:719px;width:152px;height:1px;background:#c5c5c5"></div>
<div style="left:785px;top:720px;width:152px;height:1px;background:#ffffff"></div>
<div style="left:785px;top:642px;width:152px;height:1px;background:#c8c8c8"></div>
<div style="left:748px;top:617px;width:189px;height:25px;box-sizing:border-box;border:1px solid #e2cf98;border-radius:2px;background:linear-gradient(#fffcf0 0%,#fde9b4 44%,#fdd264 48%,#fdd872 80%,#fee9a8 100%)"></div>
<div style="left:785px;top:207.0px;height:16px;line-height:16px;font-size:12px;color:#0c1a55;white-space:nowrap;-webkit-text-stroke:0.2px #0c1a55;letter-spacing:0px">剪切<span style="font-family:'Liberation Mono',monospace;font-size:10px">(<u>X</u>)</span></div>
<div style="left:785px;top:232.0px;height:16px;line-height:16px;font-size:12px;color:#0c1a55;white-space:nowrap;-webkit-text-stroke:0.2px #0c1a55;letter-spacing:0px">复制<span style="font-family:'Liberation Mono',monospace;font-size:10px">(<u>C</u>)</span></div>
<div style="left:785px;top:257.0px;height:16px;line-height:16px;font-size:12px;color:#0c1a55;white-space:nowrap;-webkit-text-stroke:0.2px #0c1a55;letter-spacing:0px">粘贴<span style="font-family:'Liberation Mono',monospace;font-size:10px">(<u>V</u>)</span></div>
<div style="left:785px;top:282.0px;height:16px;line-height:16px;font-size:12px;color:#0c1a55;white-space:nowrap;-webkit-text-stroke:0.2px #0c1a55;letter-spacing:0px">填充<span style="font-family:'Liberation Mono',monospace;font-size:10px">(<u>O</u>)</span></div>
<svg style="left:923px;top:286px" width="5" height="8" viewBox="0 0 5 8"><path d="M0.5 0.5L4.5 4L0.5 7.5z" fill="#3c4a8a"/></svg>
<div style="left:785px;top:308.5px;height:16px;line-height:16px;font-size:12px;color:#0c1a55;white-space:nowrap;-webkit-text-stroke:0.2px #0c1a55;letter-spacing:0px">清除格式<span style="font-family:'Liberation Mono',monospace;font-size:10px">(<u>F</u>)</span></div>
<div style="left:785px;top:333.5px;height:16px;line-height:16px;font-size:12px;color:#0c1a55;white-space:nowrap;-webkit-text-stroke:0.2px #0c1a55;letter-spacing:0px">清除内容<span style="font-family:'Liberation Mono',monospace;font-size:10px">(<u>N</u>)</span></div>
<div style="left:785px;top:358.5px;height:16px;line-height:16px;font-size:12px;color:#0c1a55;white-space:nowrap;-webkit-text-stroke:0.2px #0c1a55;letter-spacing:0px">清除填报<span style="font-family:'Liberation Mono',monospace;font-size:10px">(<u>K</u>)</span></div>
<div style="left:785px;top:383.5px;height:16px;line-height:16px;font-size:12px;color:#0c1a55;white-space:nowrap;-webkit-text-stroke:0.2px #0c1a55;letter-spacing:0px">清除控件<span style="font-family:'Liberation Mono',monospace;font-size:10px">(<u>C</u>)</span></div>
<div style="left:785px;top:410.5px;height:16px;line-height:16px;font-size:12px;color:#0c1a55;white-space:nowrap;-webkit-text-stroke:0.2px #0c1a55;letter-spacing:0px">插入<span style="font-family:'Liberation Mono',monospace;font-size:10px">(<u>I</u>)</span></div>
<svg style="left:923px;top:414.5px" width="5" height="8" viewBox="0 0 5 8"><path d="M0.5 0.5L4.5 4L0.5 7.5z" fill="#3c4a8a"/></svg>
<div style="left:785px;top:435.5px;height:16px;line-height:16px;font-size:12px;color:#0c1a55;white-space:nowrap;-webkit-text-stroke:0.2px #0c1a55;letter-spacing:0px">删除<span style="font-family:'Liberation Mono',monospace;font-size:10px">(<u>D</u>)</span></div>
<svg style="left:923px;top:439.5px" width="5" height="8" viewBox="0 0 5 8"><path d="M0.5 0.5L4.5 4L0.5 7.5z" fill="#3c4a8a"/></svg>
<div style="left:785px;top:462.5px;height:16px;line-height:16px;font-size:12px;color:#0c1a55;white-space:nowrap;-webkit-text-stroke:0.2px #0c1a55;letter-spacing:0px">单元格类型<span style="font-family:'Liberation Mono',monospace;font-size:10px">(<u>W</u>)</span></div>
<svg style="left:923px;top:466.5px" width="5" height="8" viewBox="0 0 5 8"><path d="M0.5 0.5L4.5 4L0.5 7.5z" fill="#3c4a8a"/></svg>
<div style="left:785px;top:487.5px;height:16px;line-height:16px;font-size:12px;color:#0c1a55;white-space:nowrap;-webkit-text-stroke:0.2px #0c1a55;letter-spacing:0px">设置单元格格式<span style="font-family:'Liberation Mono',monospace;font-size:10px">(<u>F</u>)...</span></div>
<div style="left:785px;top:514.5px;height:16px;line-height:16px;font-size:12px;color:#9a9a9a;white-space:nowrap;-webkit-text-stroke:0.2px #9a9a9a;letter-spacing:0px">自动创建超链接<span style="font-family:'Liberation Mono',monospace;font-size:10px">(<u>A</u>)</span></div>
<div style="left:785px;top:539.5px;height:16px;line-height:16px;font-size:12px;color:#0c1a55;white-space:nowrap;-webkit-text-stroke:0.2px #0c1a55;letter-spacing:0px">超链接<span style="font-family:'Liberation Mono',monospace;font-size:10px">(<u>H</u>)...</span></div>
<div style="left:785px;top:567.0px;height:16px;line-height:16px;font-size:12px;color:#0c1a55;white-space:nowrap;-webkit-text-stroke:0.2px #0c1a55;letter-spacing:0px">联动设置<span style="font-family:'Liberation Mono',monospace;font-size:10px">(<u>L</u>)...</span></div>
<div style="left:785px;top:594.0px;height:16px;line-height:16px;font-size:12px;color:#0c1a55;white-space:nowrap;-webkit-text-stroke:0.2px #0c1a55;letter-spacing:0px">数据填充设置<span style="font-family:'Liberation Mono',monospace;font-size:10px">(<u>P</u>)...</span></div>
<div style="left:785px;top:620.5px;height:16px;line-height:16px;font-size:12px;color:#0c1a55;white-space:nowrap;-webkit-text-stroke:0.2px #0c1a55;letter-spacing:0px">填报属性<span style="font-family:'Liberation Mono',monospace;font-size:10px">(<u>T</u>)...</span></div>
<div style="left:785px;top:648.5px;height:16px;line-height:16px;font-size:12px;color:#0c1a55;white-space:nowrap;-webkit-text-stroke:0.2px #0c1a55;letter-spacing:0px">样式<span style="font-family:'Liberation Mono',monospace;font-size:10px">(<u>S</u>)...</span></div>
<div style="left:785px;top:673.5px;height:16px;line-height:16px;font-size:12px;color:#0c1a55;white-space:nowrap;-webkit-text-stroke:0.2px #0c1a55;letter-spacing:0px">备注<span style="font-family:'Liberation Mono',monospace;font-size:10px">(<u>B</u>)...</span></div>
<div style="left:785px;top:698.5px;height:16px;line-height:16px;font-size:12px;color:#0c1a55;white-space:nowrap;-webkit-text-stroke:0.2px #0c1a55;letter-spacing:0px">引用情况<span style="font-family:'Liberation Mono',monospace;font-size:10px">(<u>U</u>)...</span></div>
<div style="left:785px;top:725.0px;height:16px;line-height:16px;font-size:12px;color:#0c1a55;white-space:nowrap;-webkit-text-stroke:0.2px #0c1a55;letter-spacing:0px">预测分析<span style="font-family:'Liberation Mono',monospace;font-size:10px">(<u>Y</u>)</span></div>
<svg style="left:923px;top:729px" width="5" height="8" viewBox="0 0 5 8"><path d="M0.5 0.5L4.5 4L0.5 7.5z" fill="#3c4a8a"/></svg>
<svg style="left:756px;top:206px" width="12" height="16" viewBox="0 0 12 16"><path d="M3 1L7 9M9 1L5 9" stroke="#7a828c" stroke-width="1.6"/><ellipse cx="3.2" cy="12" rx="2.3" ry="2.6" fill="#e8eef8" stroke="#2a56c0" stroke-width="1.7"/><ellipse cx="8.8" cy="12" rx="2.3" ry="2.6" fill="#e8eef8" stroke="#2a56c0" stroke-width="1.7"/></svg>
<svg style="left:754px;top:232px" width="16" height="15" viewBox="0 0 16 15"><rect x="0.5" y="0.5" width="7.5" height="10" fill="#f6f9ff" stroke="#8090a8"/><path d="M2 3.5h4M2 5.5h4M2 7.5h4" stroke="#4a7ad0"/><rect x="5.5" y="4.5" width="9" height="10" fill="#f6f9ff" stroke="#2a4aa0"/><path d="M7 7.5h6M7 9.5h6M7 11.5h6" stroke="#3a6ad0"/></svg>
<svg style="left:755px;top:257px" width="14" height="15" viewBox="0 0 14 15"><rect x="0.5" y="1.5" width="11" height="12" fill="#f2c468" stroke="#c8983c"/><rect x="3" y="0" width="6" height="3" fill="#8a8a8a"/><path d="M5.5 6.5h5l2 2v6h-7z" fill="#e2e6ee" stroke="#ffffff" stroke-width="1"/></svg>
<svg style="left:754px;top:489px" width="16" height="15" viewBox="0 0 16 15"><rect x="0.5" y="0.5" width="14" height="11" fill="#ffffff" stroke="#8898b8"/><rect x="2" y="2" width="11" height="8" fill="#7d9ef0"/><path d="M14 2L8 10" stroke="#a88050" stroke-width="2"/><path d="M8 10L5 13.5L3.5 12.5z" fill="#2e5fc0" stroke="#2e5fc0" stroke-width="1.5"/></svg>
<svg style="left:755px;top:540px" width="15" height="15" viewBox="0 0 15 15"><circle cx="7" cy="7.5" r="6.5" fill="#2a8ce0"/><path d="M4 3c2 0 3 1 3 3s-2 2-1 4 3 1 4 3M8 2c1 1 3 1 4 3" stroke="#5ac02a" stroke-width="2.2" fill="none"/><rect x="11" y="5" width="3" height="9" rx="1" fill="#a8a8a8"/></svg>
</body></html>
